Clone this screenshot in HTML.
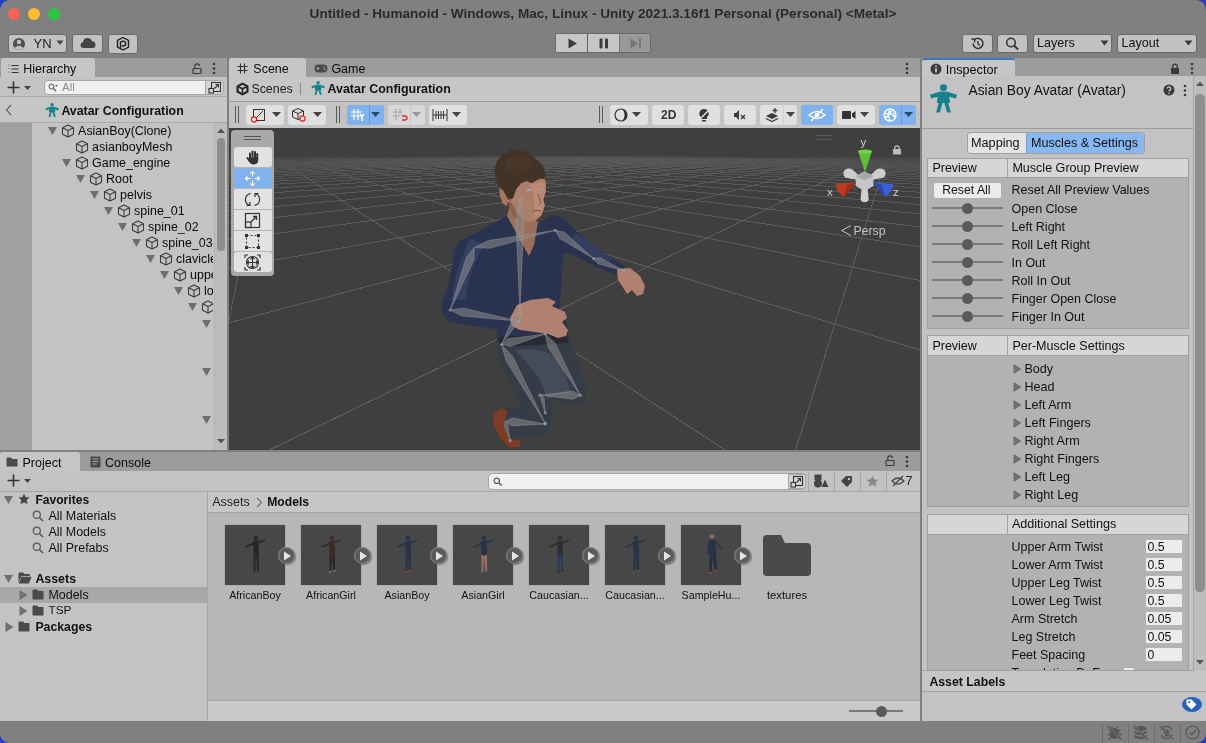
<!DOCTYPE html>
<html><head><meta charset="utf-8">
<style>
*{box-sizing:border-box;margin:0;padding:0}
html,body{width:1206px;height:743px;overflow:hidden;background:#2c3cc0;font-family:"Liberation Sans",sans-serif;font-size:12px;color:#090909}
.a{position:absolute}
#win{position:absolute;left:0;top:0;width:1206px;height:743px;background:#808080;border-radius:10px;overflow:hidden;will-change:transform}
.t{position:absolute;white-space:nowrap;line-height:1}
</style></head><body>
<div id="win">
<div class="a" style="left:8px;top:8px;width:12px;height:12px;border-radius:50%;background:#fe5f57;"></div>
<div class="a" style="left:28px;top:8px;width:12px;height:12px;border-radius:50%;background:#febc2e;"></div>
<div class="a" style="left:48px;top:8px;width:12px;height:12px;border-radius:50%;background:#28c840;"></div>
<div class="t" style="left:0;width:1206px;text-align:center;top:7px;font-size:13.6px;font-weight:bold;color:#2a2a2a">Untitled - Humanoid - Windows, Mac, Linux - Unity 2021.3.16f1 Personal (Personal) &lt;Metal&gt;</div>
<div class="a" style="left:8px;top:34px;width:59px;height:19px;background:#c2c2c2;border:1px solid #6a6a6a;border-radius:3px"></div>
<svg class="a" style="left:12px;top:36px;" width="16" height="16" viewBox="0 0 16 16"><circle cx="7" cy="8" r="6" fill="#505050"/><circle cx="7" cy="6" r="2.2" fill="#c2c2c2"/><path d="M3 11.5 Q7 8 11 11.5 L11 12.5 Q7 15 3 12.5Z" fill="#c2c2c2"/></svg>
<div class="t" style="left:33.5px;top:37.0px;font-size:13px;color:#1e1e1e;">YN</div>
<svg class="a" style="left:56px;top:40px;" width="9" height="6" viewBox="0 0 9 6"><path d="M0.5 0.5h7l-3.5 4.5z" fill="#454545"/></svg>
<div class="a" style="left:72px;top:34px;width:31px;height:19px;background:#c2c2c2;border:1px solid #6a6a6a;border-radius:3px"></div>
<svg class="a" style="left:80px;top:37px;" width="16" height="12" viewBox="0 0 16 12"><path d="M3.5 11 Q0.5 11 0.5 8 Q0.5 5.5 3 5.2 Q3.5 1 7.5 1 Q11 1 12 4.2 Q15.5 4.5 15.5 7.8 Q15.5 11 12.5 11Z" fill="#444"/></svg>
<div class="a" style="left:108px;top:34px;width:30px;height:20px;background:#c2c2c2;border:1px solid #6a6a6a;border-radius:3px"></div>
<svg class="a" style="left:115px;top:36px;" width="16" height="16" viewBox="0 0 16 16"><path d="M8 1.5 L13.5 4.5 V11 L8 14 L2.5 11 V4.5Z" fill="none" stroke="#222" stroke-width="1.4"/><path d="M5.5 13 V6.2 L8 5 L10.5 6.2 V9 L8 10.2 L6.8 9.6" fill="none" stroke="#222" stroke-width="1.4"/></svg>
<div class="a" style="left:555px;top:33px;width:96px;height:20px;border:1px solid #6a6a6a;border-radius:2px;overflow:hidden;background:#999"><div class="a" style="left:0;top:0;width:31px;height:18px;background:#c6c6c6"></div><div class="a" style="left:31px;top:0;width:1px;height:18px;background:#5e5e5e"></div><div class="a" style="left:32px;top:0;width:31px;height:18px;background:#c6c6c6"></div><div class="a" style="left:63px;top:0;width:1px;height:18px;background:#777"></div></div>
<svg class="a" style="left:568px;top:38px;" width="10" height="11" viewBox="0 0 10 11"><path d="M0.5 0.5 L9 5.5 L0.5 10.5Z" fill="#3c3c3c"/></svg>
<svg class="a" style="left:599px;top:38px;" width="10" height="11" viewBox="0 0 10 11"><rect x="0.5" y="0.5" width="3" height="10" rx="1" fill="#3c3c3c"/><rect x="6" y="0.5" width="3" height="10" rx="1" fill="#3c3c3c"/></svg>
<svg class="a" style="left:630px;top:38px;" width="14" height="11" viewBox="0 0 14 11"><path d="M0.5 0.5 L8 5.5 L0.5 10.5Z" fill="#777"/><rect x="9" y="0.5" width="2" height="10" fill="#777"/></svg>
<div class="a" style="left:962px;top:34px;width:31px;height:19px;background:#c2c2c2;border:1px solid #6a6a6a;border-radius:3px"></div>
<div class="a" style="left:997px;top:34px;width:31px;height:19px;background:#c2c2c2;border:1px solid #6a6a6a;border-radius:3px"></div>
<div class="a" style="left:1033px;top:34px;width:79px;height:19px;background:#c2c2c2;border:1px solid #6a6a6a;border-radius:3px"></div>
<div class="a" style="left:1117px;top:34px;width:80px;height:19px;background:#c2c2c2;border:1px solid #6a6a6a;border-radius:3px"></div>
<svg class="a" style="left:969px;top:36px;" width="17" height="15" viewBox="0 0 17 15"><path d="M4 7.5 A5 5 0 1 0 5.5 3.8" fill="none" stroke="#333" stroke-width="1.5"/><path d="M2.5 3 L5.8 3.2 L5.5 6.5" fill="none" stroke="#333" stroke-width="1.4"/><path d="M9 5 V8 L11 9.5" fill="none" stroke="#333" stroke-width="1.4"/></svg>
<svg class="a" style="left:1004px;top:36px;" width="17" height="15" viewBox="0 0 17 15"><circle cx="7" cy="6.5" r="4.3" fill="none" stroke="#333" stroke-width="1.5"/><path d="M10 9.5 L14 13.5" stroke="#333" stroke-width="2"/></svg>
<div class="t" style="left:1037.0px;top:37.2px;font-size:12.6px;color:#111;">Layers</div>
<svg class="a" style="left:1100px;top:40px;" width="10" height="7" viewBox="0 0 10 7"><path d="M0.5 0.5h8l-4 5z" fill="#3a3a3a"/></svg>
<div class="t" style="left:1121.5px;top:37.2px;font-size:12.6px;color:#111;">Layout</div>
<svg class="a" style="left:1184px;top:40px;" width="10" height="7" viewBox="0 0 10 7"><path d="M0.5 0.5h8l-4 5z" fill="#3a3a3a"/></svg>
<div class="a" style="left:0px;top:58px;width:227px;height:19px;background:#9c9c9c;"></div>
<div class="a" style="left:1px;top:58px;width:94px;height:19px;background:#c6c6c6;border-radius:3px 3px 0 0"></div>
<div class="a" style="left:0px;top:77px;width:227px;height:373px;background:#c3c3c3;"></div>
<div class="a" style="left:229px;top:58px;width:691px;height:19px;background:#9c9c9c;"></div>
<div class="a" style="left:229px;top:58px;width:77px;height:19px;background:#c6c6c6;border-radius:3px 3px 0 0"></div>
<div class="a" style="left:229px;top:77px;width:691px;height:24px;background:#c6c6c6;"></div>
<div class="a" style="left:229px;top:101px;width:691px;height:27px;background:#c3c3c3;"></div>
<div class="a" style="left:922px;top:58px;width:284px;height:18px;background:#9c9c9c;"></div>
<div class="a" style="left:922px;top:58px;width:93px;height:18px;background:#c6c6c6;border-radius:3px 3px 0 0;border-top:2px solid #3a79bb"></div>
<div class="a" style="left:922px;top:76px;width:284px;height:644px;background:#c3c3c3;"></div>
<div class="a" style="left:0px;top:452px;width:920px;height:19px;background:#9c9c9c;"></div>
<div class="a" style="left:0px;top:452px;width:80px;height:19px;background:#c6c6c6;border-radius:3px 3px 0 0"></div>
<div class="a" style="left:0px;top:471px;width:920px;height:250px;background:#c3c3c3;"></div>
<svg class="a" style="left:8px;top:64px;" width="11" height="11" viewBox="0 0 11 11"><path d="M3.5 1.5H10.5M3.5 5H10.5M3.5 8.5H10.5" stroke="#333" stroke-width="1"/><path d="M1 0.5V9.5" stroke="#333" stroke-width="0.7" stroke-dasharray="1 2.5"/></svg>
<div class="t" style="left:23.3px;top:62.8px;font-size:12.4px;color:#0a0a0a;">Hierarchy</div>
<svg class="a" style="left:192px;top:63px;" width="10" height="11" viewBox="0 0 10 11"><rect x="1" y="5.5" width="8" height="5" rx="0.8" fill="none" stroke="#3a3a3a" stroke-width="1.2"/><path d="M2.8 5.5 V3.2 A2.3 2.3 0 0 1 7.4 3" fill="none" stroke="#3a3a3a" stroke-width="1.2"/></svg>
<svg class="a" style="left:212px;top:62px;" width="4" height="13" viewBox="0 0 4 13"><circle cx="2" cy="2" r="1.3" fill="#3a3a3a"/><circle cx="2" cy="6.5" r="1.3" fill="#3a3a3a"/><circle cx="2" cy="11" r="1.3" fill="#3a3a3a"/></svg>
<div class="a" style="left:0px;top:96px;width:227px;height:1px;background:#a9a9a9;"></div>
<svg class="a" style="left:7px;top:81px;" width="13" height="13" viewBox="0 0 13 13"><path d="M6.5 0.5V12.5M0.5 6.5H12.5" stroke="#333" stroke-width="1.6"/></svg>
<svg class="a" style="left:24px;top:86px;" width="7" height="4" viewBox="0 0 7 4"><path d="M0 0 H7 L3.5 4Z" fill="#444"/></svg>
<div class="a" style="left:44px;top:80px;width:180px;height:15px;background:#f0f0f0;border:1px solid #a6a6a6;border-radius:4px"></div>
<div class="a" style="left:205px;top:80px;width:19px;height:15px;background:#d6d6d6;border:1px solid #a6a6a6;border-radius:0 4px 4px 0"></div>
<svg class="a" style="left:208px;top:81px;" width="14" height="13" viewBox="0 0 14 13"><rect x="3.5" y="1.5" width="9" height="9" fill="none" stroke="#333" stroke-width="1.1"/><rect x="1" y="7.5" width="4.5" height="4.5" fill="#d6d6d6" stroke="#333" stroke-width="1.1"/><path d="M6.5 7.5L10.5 3.5M7.5 3.5H10.5V6.5" fill="none" stroke="#333" stroke-width="1.1"/></svg>
<svg class="a" style="left:48px;top:83px;" width="10" height="9" viewBox="0 0 10 9"><circle cx="3.5" cy="3.5" r="2.5" fill="none" stroke="#555" stroke-width="1"/><path d="M5.5 5.5L8 8" stroke="#555" stroke-width="1.3"/><path d="M7 2h3l-1.5 1.7z" fill="#555"/></svg>
<div class="t" style="left:62.0px;top:81.8px;font-size:11.5px;color:#8c8c8c;">All</div>
<div class="a" style="left:0px;top:97px;width:227px;height:25px;background:#c6c6c6;"></div>
<div class="a" style="left:0px;top:122px;width:227px;height:1px;background:#a9a9a9;"></div>
<svg class="a" style="left:5px;top:104px;" width="8" height="12" viewBox="0 0 8 12"><path d="M6 1 L1.5 6 L6 11" fill="none" stroke="#6a6a6a" stroke-width="1.3"/></svg>
<svg class="a" style="left:45px;top:103px;" width="15" height="15" viewBox="0 0 15 15"><g transform="scale(0.95)"><circle cx="7.5" cy="1.9" r="1.8" fill="#16808c"/><path d="M4.8 4 H10.2 L10.9 9.8 H4.1Z" fill="#16808c"/><path d="M5 4.1 L0.5 5.6 L1 7.5 L5 6.5Z M10 4.1 L14.5 5.6 L14 7.5 L10 6.5Z" fill="#16808c"/><path d="M5.1 9.4 L3.7 14.8 H5.6 L7.1 9.6Z M9.9 9.4 L11.3 14.8 H9.4 L7.9 9.6Z" fill="#16808c"/></g></svg>
<div class="t" style="left:61.4px;top:104.8px;font-size:12.35px;font-weight:bold;color:#111;">Avatar Configuration</div>
<div class="a" style="left:0px;top:123px;width:32px;height:327px;background:#a1a1a1;"></div>
<div class="a" style="left:0;top:0;width:213px;height:450px;overflow:hidden">
<svg class="a" style="left:48px;top:127px;" width="9" height="8" viewBox="0 0 9 8"><path d="M0 0 H9 L4.5 8Z" fill="#6f6f6f"/></svg>
<svg class="a" style="left:61px;top:124px;" width="14" height="14" viewBox="0 0 14 14"><path d="M7 1 L12.5 3.8 V10.2 L7 13 L1.5 10.2 V3.8Z M1.5 3.8 L7 6.6 L12.5 3.8 M7 6.6 V13" fill="none" stroke="#3c3c3c" stroke-width="1.1" stroke-linejoin="round"/></svg>
<div class="t" style="left:78.1px;top:124.8px;font-size:12.45px;color:#0a0a0a;">AsianBoy(Clone)</div>
<svg class="a" style="left:75px;top:140px;" width="14" height="14" viewBox="0 0 14 14"><path d="M7 1 L12.5 3.8 V10.2 L7 13 L1.5 10.2 V3.8Z M1.5 3.8 L7 6.6 L12.5 3.8 M7 6.6 V13" fill="none" stroke="#3c3c3c" stroke-width="1.1" stroke-linejoin="round"/></svg>
<div class="t" style="left:92.1px;top:140.8px;font-size:12.45px;color:#0a0a0a;">asianboyMesh</div>
<svg class="a" style="left:62px;top:159px;" width="9" height="8" viewBox="0 0 9 8"><path d="M0 0 H9 L4.5 8Z" fill="#6f6f6f"/></svg>
<svg class="a" style="left:75px;top:156px;" width="14" height="14" viewBox="0 0 14 14"><path d="M7 1 L12.5 3.8 V10.2 L7 13 L1.5 10.2 V3.8Z M1.5 3.8 L7 6.6 L12.5 3.8 M7 6.6 V13" fill="none" stroke="#3c3c3c" stroke-width="1.1" stroke-linejoin="round"/></svg>
<div class="t" style="left:92.1px;top:156.8px;font-size:12.45px;color:#0a0a0a;">Game_engine</div>
<svg class="a" style="left:76px;top:175px;" width="9" height="8" viewBox="0 0 9 8"><path d="M0 0 H9 L4.5 8Z" fill="#6f6f6f"/></svg>
<svg class="a" style="left:89px;top:172px;" width="14" height="14" viewBox="0 0 14 14"><path d="M7 1 L12.5 3.8 V10.2 L7 13 L1.5 10.2 V3.8Z M1.5 3.8 L7 6.6 L12.5 3.8 M7 6.6 V13" fill="none" stroke="#3c3c3c" stroke-width="1.1" stroke-linejoin="round"/></svg>
<div class="t" style="left:106.1px;top:172.8px;font-size:12.45px;color:#0a0a0a;">Root</div>
<svg class="a" style="left:90px;top:191px;" width="9" height="8" viewBox="0 0 9 8"><path d="M0 0 H9 L4.5 8Z" fill="#6f6f6f"/></svg>
<svg class="a" style="left:103px;top:188px;" width="14" height="14" viewBox="0 0 14 14"><path d="M7 1 L12.5 3.8 V10.2 L7 13 L1.5 10.2 V3.8Z M1.5 3.8 L7 6.6 L12.5 3.8 M7 6.6 V13" fill="none" stroke="#3c3c3c" stroke-width="1.1" stroke-linejoin="round"/></svg>
<div class="t" style="left:120.1px;top:188.8px;font-size:12.45px;color:#0a0a0a;">pelvis</div>
<svg class="a" style="left:104px;top:207px;" width="9" height="8" viewBox="0 0 9 8"><path d="M0 0 H9 L4.5 8Z" fill="#6f6f6f"/></svg>
<svg class="a" style="left:117px;top:204px;" width="14" height="14" viewBox="0 0 14 14"><path d="M7 1 L12.5 3.8 V10.2 L7 13 L1.5 10.2 V3.8Z M1.5 3.8 L7 6.6 L12.5 3.8 M7 6.6 V13" fill="none" stroke="#3c3c3c" stroke-width="1.1" stroke-linejoin="round"/></svg>
<div class="t" style="left:134.1px;top:204.8px;font-size:12.45px;color:#0a0a0a;">spine_01</div>
<svg class="a" style="left:118px;top:223px;" width="9" height="8" viewBox="0 0 9 8"><path d="M0 0 H9 L4.5 8Z" fill="#6f6f6f"/></svg>
<svg class="a" style="left:131px;top:220px;" width="14" height="14" viewBox="0 0 14 14"><path d="M7 1 L12.5 3.8 V10.2 L7 13 L1.5 10.2 V3.8Z M1.5 3.8 L7 6.6 L12.5 3.8 M7 6.6 V13" fill="none" stroke="#3c3c3c" stroke-width="1.1" stroke-linejoin="round"/></svg>
<div class="t" style="left:148.1px;top:220.8px;font-size:12.45px;color:#0a0a0a;">spine_02</div>
<svg class="a" style="left:132px;top:239px;" width="9" height="8" viewBox="0 0 9 8"><path d="M0 0 H9 L4.5 8Z" fill="#6f6f6f"/></svg>
<svg class="a" style="left:145px;top:236px;" width="14" height="14" viewBox="0 0 14 14"><path d="M7 1 L12.5 3.8 V10.2 L7 13 L1.5 10.2 V3.8Z M1.5 3.8 L7 6.6 L12.5 3.8 M7 6.6 V13" fill="none" stroke="#3c3c3c" stroke-width="1.1" stroke-linejoin="round"/></svg>
<div class="t" style="left:162.1px;top:236.8px;font-size:12.45px;color:#0a0a0a;">spine_03</div>
<svg class="a" style="left:146px;top:255px;" width="9" height="8" viewBox="0 0 9 8"><path d="M0 0 H9 L4.5 8Z" fill="#6f6f6f"/></svg>
<svg class="a" style="left:159px;top:252px;" width="14" height="14" viewBox="0 0 14 14"><path d="M7 1 L12.5 3.8 V10.2 L7 13 L1.5 10.2 V3.8Z M1.5 3.8 L7 6.6 L12.5 3.8 M7 6.6 V13" fill="none" stroke="#3c3c3c" stroke-width="1.1" stroke-linejoin="round"/></svg>
<div class="t" style="left:176.1px;top:252.8px;font-size:12.45px;color:#0a0a0a;">clavicle_l</div>
<svg class="a" style="left:160px;top:271px;" width="9" height="8" viewBox="0 0 9 8"><path d="M0 0 H9 L4.5 8Z" fill="#6f6f6f"/></svg>
<svg class="a" style="left:173px;top:268px;" width="14" height="14" viewBox="0 0 14 14"><path d="M7 1 L12.5 3.8 V10.2 L7 13 L1.5 10.2 V3.8Z M1.5 3.8 L7 6.6 L12.5 3.8 M7 6.6 V13" fill="none" stroke="#3c3c3c" stroke-width="1.1" stroke-linejoin="round"/></svg>
<div class="t" style="left:190.1px;top:268.8px;font-size:12.45px;color:#0a0a0a;">upperarm_l</div>
<svg class="a" style="left:174px;top:287px;" width="9" height="8" viewBox="0 0 9 8"><path d="M0 0 H9 L4.5 8Z" fill="#6f6f6f"/></svg>
<svg class="a" style="left:187px;top:284px;" width="14" height="14" viewBox="0 0 14 14"><path d="M7 1 L12.5 3.8 V10.2 L7 13 L1.5 10.2 V3.8Z M1.5 3.8 L7 6.6 L12.5 3.8 M7 6.6 V13" fill="none" stroke="#3c3c3c" stroke-width="1.1" stroke-linejoin="round"/></svg>
<div class="t" style="left:204.1px;top:284.8px;font-size:12.45px;color:#0a0a0a;">lowerarm_l</div>
<svg class="a" style="left:188px;top:303px;" width="9" height="8" viewBox="0 0 9 8"><path d="M0 0 H9 L4.5 8Z" fill="#6f6f6f"/></svg>
<svg class="a" style="left:201px;top:300px;" width="14" height="14" viewBox="0 0 14 14"><path d="M7 1 L12.5 3.8 V10.2 L7 13 L1.5 10.2 V3.8Z M1.5 3.8 L7 6.6 L12.5 3.8 M7 6.6 V13" fill="none" stroke="#3c3c3c" stroke-width="1.1" stroke-linejoin="round"/></svg>
<svg class="a" style="left:202px;top:320px;" width="9" height="8" viewBox="0 0 9 8"><path d="M0 0 H9 L4.5 8Z" fill="#6f6f6f"/></svg>
<svg class="a" style="left:202px;top:368px;" width="9" height="8" viewBox="0 0 9 8"><path d="M0 0 H9 L4.5 8Z" fill="#6f6f6f"/></svg>
<svg class="a" style="left:202px;top:416px;" width="9" height="8" viewBox="0 0 9 8"><path d="M0 0 H9 L4.5 8Z" fill="#6f6f6f"/></svg>
</div>
<div class="a" style="left:214px;top:123px;width:13px;height:327px;background:#bdbdbd;"></div>
<div class="a" style="left:214px;top:123px;width:1px;height:327px;background:#b0b0b0;"></div>
<svg class="a" style="left:216px;top:127px;" width="10" height="7" viewBox="0 0 10 7"><path d="M1 6H9L5 1.5Z" fill="#555"/></svg>
<div class="a" style="left:216.5px;top:138px;width:8.5px;height:113px;border-radius:4.5px;background:#8e8e8e"></div>
<svg class="a" style="left:216px;top:438px;" width="10" height="7" viewBox="0 0 10 7"><path d="M1 1H9L5 5.5Z" fill="#555"/></svg>
<svg class="a" style="left:237px;top:63px;" width="11" height="11" viewBox="0 0 11 11"><path d="M3.5 0.5V10.5M7.5 0.5V10.5M0.5 3.5H10.5M0.5 7.5H10.5" stroke="#333" stroke-width="1.1"/></svg>
<div class="t" style="left:253.3px;top:63.2px;font-size:12.5px;color:#0a0a0a;">Scene</div>
<svg class="a" style="left:314px;top:64px;" width="14" height="9" viewBox="0 0 14 9"><rect x="0.5" y="0.5" width="13" height="8" rx="4" fill="#4a4a4a"/><path d="M2.5 4.5H5.5M4 3V6" stroke="#a5a5a5" stroke-width="1"/><circle cx="10" cy="3.5" r="0.8" fill="#a5a5a5"/><circle cx="11" cy="5.5" r="0.8" fill="#a5a5a5"/></svg>
<div class="t" style="left:331.4px;top:63.2px;font-size:12.5px;color:#0a0a0a;">Game</div>
<svg class="a" style="left:905px;top:62px;" width="4" height="13" viewBox="0 0 4 13"><circle cx="2" cy="2" r="1.3" fill="#3a3a3a"/><circle cx="2" cy="6.5" r="1.3" fill="#3a3a3a"/><circle cx="2" cy="11" r="1.3" fill="#3a3a3a"/></svg>
<div class="a" style="left:229px;top:101px;width:691px;height:1px;background:#9a9a9a;"></div>
<svg class="a" style="left:236px;top:82px;" width="13" height="14" viewBox="0 0 13 14"><path d="M6.5 0.5 L12.5 3.8 V10.2 L6.5 13.5 L0.5 10.2 V3.8Z" fill="#222"/><path d="M6.5 2.8 L10.4 5 V9 L6.5 11.2 L2.6 9 V5Z" fill="#cbcbcb"/><path d="M6.5 6.8 L10.4 5 M6.5 6.8 L2.6 5 M6.5 6.8 V11.2" stroke="#222" stroke-width="1.6"/></svg>
<div class="t" style="left:251.4px;top:82.8px;font-size:12.4px;color:#222;">Scenes</div>
<div class="a" style="left:300px;top:83px;width:1px;height:12px;background:#8c8c8c;"></div>
<svg class="a" style="left:311px;top:81px;" width="15" height="15" viewBox="0 0 15 15"><g transform="scale(0.95)"><circle cx="7.5" cy="1.9" r="1.8" fill="#16808c"/><path d="M4.8 4 H10.2 L10.9 9.8 H4.1Z" fill="#16808c"/><path d="M5 4.1 L0.5 5.6 L1 7.5 L5 6.5Z M10 4.1 L14.5 5.6 L14 7.5 L10 6.5Z" fill="#16808c"/><path d="M5.1 9.4 L3.7 14.8 H5.6 L7.1 9.6Z M9.9 9.4 L11.3 14.8 H9.4 L7.9 9.6Z" fill="#16808c"/></g></svg>
<div class="t" style="left:327.5px;top:82.8px;font-size:12.45px;font-weight:bold;color:#111;">Avatar Configuration</div>
<div class="a" style="left:235px;top:106px;width:1px;height:17px;background:#5a5a5a;"></div>
<div class="a" style="left:238px;top:106px;width:1px;height:17px;background:#5a5a5a;"></div>
<div class="a" style="left:246px;top:105px;width:38px;height:20px;background:#e0e0e0;border-radius:3px"></div>
<div class="a" style="left:288px;top:105px;width:38px;height:20px;background:#e0e0e0;border-radius:3px"></div>
<svg class="a" style="left:250px;top:107px;" width="16" height="16" viewBox="0 0 16 16"><rect x="3.5" y="2.5" width="11" height="11" fill="none" stroke="#333" stroke-width="1"/><path d="M5 12L13 4" stroke="#333" stroke-width="1"/><circle cx="4" cy="12.5" r="2.6" fill="#e4e4e4" stroke="#d22" stroke-width="1.2"/></svg>
<svg class="a" style="left:272px;top:112px;" width="9" height="5" viewBox="0 0 9 5"><path d="M0 0 H9 L4.5 5Z" fill="#444"/></svg>
<svg class="a" style="left:291px;top:107px;" width="16" height="16" viewBox="0 0 16 16"><path d="M7 1.5 L12.5 4 V10 L7 12.5 L1.5 10 V4Z M1.5 4 L7 6.5 L12.5 4 M7 6.5V12.5" fill="none" stroke="#333" stroke-width="1"/><circle cx="11.5" cy="11.5" r="2.6" fill="#e4e4e4" stroke="#d22" stroke-width="1.2"/></svg>
<svg class="a" style="left:313px;top:112px;" width="9" height="5" viewBox="0 0 9 5"><path d="M0 0 H9 L4.5 5Z" fill="#444"/></svg>
<div class="a" style="left:336px;top:106px;width:1px;height:17px;background:#5a5a5a;"></div>
<div class="a" style="left:339px;top:106px;width:1px;height:17px;background:#5a5a5a;"></div>
<div class="a" style="left:347px;top:105px;width:37px;height:20px;background:#80b2ee;border-radius:3px"></div>
<div class="a" style="left:369px;top:105px;width:1px;height:20px;background:#6a9ad4;"></div>
<svg class="a" style="left:350px;top:107px;" width="16" height="16" viewBox="0 0 16 16"><path d="M4 2V13M8 2V13M1 5H12M1 9H12" stroke="#fff" stroke-width="1.1"/><path d="M10 7L12 10L14 7M12 10V14" fill="none" stroke="#fff" stroke-width="1.5"/></svg>
<svg class="a" style="left:371px;top:112px;" width="9" height="5" viewBox="0 0 9 5"><path d="M0 0 H9 L4.5 5Z" fill="#2a4a70"/></svg>
<div class="a" style="left:388px;top:105px;width:37px;height:20px;background:#d8d8d8;border-radius:3px"></div>
<div class="a" style="left:410px;top:105px;width:1px;height:20px;background:#c8c8c8;"></div>
<svg class="a" style="left:392px;top:107px;" width="16" height="16" viewBox="0 0 16 16"><path d="M4 2V13M8 2V10M1 5H11M1 9H7" stroke="#888" stroke-width="1" stroke-dasharray="1.5 1"/><path d="M10 9H13A2 2 0 0 1 13 13H10" fill="none" stroke="#c33" stroke-width="1.3"/></svg>
<svg class="a" style="left:412px;top:112px;" width="9" height="5" viewBox="0 0 9 5"><path d="M0 0 H9 L4.5 5Z" fill="#999"/></svg>
<div class="a" style="left:429px;top:105px;width:38px;height:20px;background:#e0e0e0;border-radius:3px"></div>
<svg class="a" style="left:432px;top:108px;" width="16" height="14" viewBox="0 0 16 14"><path d="M1 1V13M15 1V13M1 7H15M4 3V11M6.5 3V11M9 3V11M11.5 3V11" stroke="#333" stroke-width="1"/></svg>
<svg class="a" style="left:452px;top:112px;" width="9" height="5" viewBox="0 0 9 5"><path d="M0 0 H9 L4.5 5Z" fill="#444"/></svg>
<div class="a" style="left:599px;top:106px;width:1px;height:17px;background:#5a5a5a;"></div>
<div class="a" style="left:602px;top:106px;width:1px;height:17px;background:#5a5a5a;"></div>
<div class="a" style="left:610px;top:105px;width:38px;height:20px;background:#e0e0e0;border-radius:3px"></div>
<svg class="a" style="left:613px;top:107px;" width="16" height="16" viewBox="0 0 16 16"><circle cx="8" cy="8" r="6" fill="none" stroke="#333" stroke-width="1.2"/><path d="M8 2A6 6 0 0 1 8 14A3.5 6 0 0 0 8 2Z" fill="#333"/></svg>
<svg class="a" style="left:632px;top:112px;" width="9" height="5" viewBox="0 0 9 5"><path d="M0 0 H9 L4.5 5Z" fill="#444"/></svg>
<div class="a" style="left:652px;top:105px;width:32px;height:20px;background:#e0e0e0;border-radius:3px"></div>
<div class="t" style="left:661.0px;top:109.0px;font-size:12px;font-weight:bold;color:#333;">2D</div>
<div class="a" style="left:688px;top:105px;width:32px;height:20px;background:#e0e0e0;border-radius:3px"></div>
<svg class="a" style="left:697px;top:108px;" width="14" height="14" viewBox="0 0 14 14"><path d="M7 1A4.5 4.5 0 0 1 10 9V11H4V9A4.5 4.5 0 0 1 7 1Z" fill="#3a3a3a"/><rect x="5" y="12" width="4" height="1.5" fill="#3a3a3a"/><path d="M2 12L12 2" stroke="#e4e4e4" stroke-width="1.4"/></svg>
<div class="a" style="left:724px;top:105px;width:32px;height:20px;background:#e0e0e0;border-radius:3px"></div>
<svg class="a" style="left:733px;top:108px;" width="14" height="14" viewBox="0 0 14 14"><path d="M1 5H3L6 2V12L3 9H1Z" fill="#3a3a3a"/><path d="M8 7L12 11M12 7L8 11" stroke="#3a3a3a" stroke-width="1.3"/></svg>
<div class="a" style="left:760px;top:105px;width:37px;height:20px;background:#e0e0e0;border-radius:3px"></div>
<div class="a" style="left:783px;top:105px;width:1px;height:20px;background:#cfcfcf;"></div>
<svg class="a" style="left:764px;top:107px;" width="16" height="16" viewBox="0 0 16 16"><path d="M2 9L8 6L14 9L8 12Z" fill="#3a3a3a"/><path d="M2 11.5L8 14.5L14 11.5" fill="none" stroke="#3a3a3a" stroke-width="1.2"/><path d="M11 1V6M8.5 3.5H13.5" stroke="#3a3a3a" stroke-width="1.3"/></svg>
<svg class="a" style="left:786px;top:112px;" width="9" height="5" viewBox="0 0 9 5"><path d="M0 0 H9 L4.5 5Z" fill="#444"/></svg>
<div class="a" style="left:801px;top:105px;width:32px;height:20px;background:#80b2ee;border-radius:3px"></div>
<svg class="a" style="left:808px;top:108px;" width="18" height="14" viewBox="0 0 18 14"><path d="M1 7Q9 0 17 7Q9 14 1 7Z" fill="none" stroke="#fff" stroke-width="1.4"/><circle cx="9" cy="7" r="2.3" fill="#fff"/><path d="M3 13L15 1" stroke="#fff" stroke-width="1.4"/></svg>
<div class="a" style="left:837px;top:105px;width:38px;height:20px;background:#e0e0e0;border-radius:3px"></div>
<svg class="a" style="left:841px;top:108px;" width="16" height="14" viewBox="0 0 16 14"><rect x="1" y="3" width="9" height="8" rx="1" fill="#333"/><path d="M11 5.5L14.5 3V11L11 8.5Z" fill="#333"/></svg>
<svg class="a" style="left:860px;top:112px;" width="9" height="5" viewBox="0 0 9 5"><path d="M0 0 H9 L4.5 5Z" fill="#444"/></svg>
<div class="a" style="left:879px;top:105px;width:37px;height:20px;background:#80b2ee;border-radius:3px"></div>
<div class="a" style="left:901px;top:105px;width:1px;height:20px;background:#6a9ad4;"></div>
<svg class="a" style="left:882px;top:107px;" width="16" height="16" viewBox="0 0 16 16"><circle cx="8" cy="8" r="6" fill="none" stroke="#fff" stroke-width="1.3"/><path d="M3 6Q8 9 13 6M8 2Q5 8 8 14M4 11L11 3" fill="none" stroke="#fff" stroke-width="1.1"/><circle cx="8" cy="5" r="1.3" fill="#fff"/><circle cx="4" cy="10" r="1.3" fill="#fff"/><circle cx="12" cy="9" r="1.3" fill="#fff"/></svg>
<svg class="a" style="left:904px;top:112px;" width="9" height="5" viewBox="0 0 9 5"><path d="M0 0 H9 L4.5 5Z" fill="#2a4a70"/></svg>
<div class="a" style="left:229px;top:128px;width:691px;height:322px;background:#3f3f3f;"></div>
<svg class="a" style="left:229px;top:128px" width="691" height="322" viewBox="0 0 691 322"><defs><linearGradient id="hz" x1="0" y1="0" x2="0" y2="1"><stop offset="0" stop-color="#4a4a4a"/><stop offset="1" stop-color="#3f3f3f" stop-opacity="0"/></linearGradient></defs><rect x="0" y="29.5" width="691" height="14" fill="url(#hz)"/><g stroke="#606060" stroke-width="1" fill="none" shape-rendering="crispEdges"><line x1="-132.2" y1="34.0" x2="73.1" y2="30.8" stroke-opacity="0.04"/><line x1="-110.9" y1="34.0" x2="88.9" y2="30.8" stroke-opacity="0.05"/><line x1="88.9" y1="30.8" x2="236.9" y2="28.5" stroke-opacity="0.03"/><line x1="-89.6" y1="34.0" x2="104.7" y2="30.8" stroke-opacity="0.07"/><line x1="104.7" y1="30.8" x2="248.6" y2="28.5" stroke-opacity="0.04"/><line x1="-68.3" y1="34.0" x2="120.5" y2="30.8" stroke-opacity="0.09"/><line x1="120.5" y1="30.8" x2="260.3" y2="28.5" stroke-opacity="0.05"/><line x1="-294.2" y1="38.2" x2="-46.9" y2="34.0" stroke-opacity="0.10"/><line x1="-46.9" y1="34.0" x2="136.3" y2="30.8" stroke-opacity="0.11"/><line x1="136.3" y1="30.8" x2="272.0" y2="28.5" stroke-opacity="0.06"/><line x1="-265.4" y1="38.2" x2="-25.6" y2="34.0" stroke-opacity="0.12"/><line x1="-25.6" y1="34.0" x2="152.1" y2="30.8" stroke-opacity="0.13"/><line x1="152.1" y1="30.8" x2="283.7" y2="28.5" stroke-opacity="0.07"/><line x1="-236.6" y1="38.2" x2="-4.3" y2="34.0" stroke-opacity="0.15"/><line x1="-4.3" y1="34.0" x2="167.8" y2="30.8" stroke-opacity="0.15"/><line x1="167.8" y1="30.8" x2="295.4" y2="28.5" stroke-opacity="0.08"/><line x1="-207.9" y1="38.2" x2="17.0" y2="34.0" stroke-opacity="0.17"/><line x1="17.0" y1="34.0" x2="183.6" y2="30.8" stroke-opacity="0.17"/><line x1="183.6" y1="30.8" x2="307.1" y2="28.5" stroke-opacity="0.09"/><line x1="-179.1" y1="38.2" x2="38.3" y2="34.0" stroke-opacity="0.20"/><line x1="38.3" y1="34.0" x2="199.4" y2="30.8" stroke-opacity="0.19"/><line x1="199.4" y1="30.8" x2="318.8" y2="28.5" stroke-opacity="0.10"/><line x1="-150.3" y1="38.2" x2="59.6" y2="34.0" stroke-opacity="0.23"/><line x1="59.6" y1="34.0" x2="215.2" y2="30.8" stroke-opacity="0.21"/><line x1="215.2" y1="30.8" x2="330.5" y2="28.5" stroke-opacity="0.10"/><line x1="-121.6" y1="38.2" x2="80.9" y2="34.0" stroke-opacity="0.25"/><line x1="80.9" y1="34.0" x2="231.0" y2="30.8" stroke-opacity="0.23"/><line x1="231.0" y1="30.8" x2="342.2" y2="28.5" stroke-opacity="0.11"/><line x1="-92.8" y1="38.2" x2="102.2" y2="34.0" stroke-opacity="0.28"/><line x1="102.2" y1="34.0" x2="246.8" y2="30.8" stroke-opacity="0.24"/><line x1="246.8" y1="30.8" x2="353.9" y2="28.5" stroke-opacity="0.11"/><line x1="-64.1" y1="38.2" x2="123.5" y2="34.0" stroke-opacity="0.30"/><line x1="123.5" y1="34.0" x2="262.6" y2="30.8" stroke-opacity="0.26"/><line x1="262.6" y1="30.8" x2="365.6" y2="28.5" stroke-opacity="0.12"/><line x1="-278.3" y1="44.0" x2="-35.3" y2="38.2" stroke-opacity="0.31"/><line x1="-35.3" y1="38.2" x2="144.9" y2="34.0" stroke-opacity="0.32"/><line x1="144.9" y1="34.0" x2="278.4" y2="30.8" stroke-opacity="0.27"/><line x1="278.4" y1="30.8" x2="377.3" y2="28.5" stroke-opacity="0.12"/><line x1="-239.5" y1="44.0" x2="-6.5" y2="38.2" stroke-opacity="0.34"/><line x1="-6.5" y1="38.2" x2="166.2" y2="34.0" stroke-opacity="0.35"/><line x1="166.2" y1="34.0" x2="294.2" y2="30.8" stroke-opacity="0.28"/><line x1="294.2" y1="30.8" x2="389.0" y2="28.5" stroke-opacity="0.12"/><line x1="-200.7" y1="44.0" x2="22.2" y2="38.2" stroke-opacity="0.37"/><line x1="22.2" y1="38.2" x2="187.5" y2="34.0" stroke-opacity="0.37"/><line x1="187.5" y1="34.0" x2="310.0" y2="30.8" stroke-opacity="0.29"/><line x1="310.0" y1="30.8" x2="400.7" y2="28.5" stroke-opacity="0.12"/><line x1="-161.9" y1="44.0" x2="51.0" y2="38.2" stroke-opacity="0.40"/><line x1="51.0" y1="38.2" x2="208.8" y2="34.0" stroke-opacity="0.39"/><line x1="208.8" y1="34.0" x2="325.7" y2="30.8" stroke-opacity="0.30"/><line x1="325.7" y1="30.8" x2="412.4" y2="28.5" stroke-opacity="0.12"/><line x1="-123.1" y1="44.0" x2="79.8" y2="38.2" stroke-opacity="0.43"/><line x1="79.8" y1="38.2" x2="230.1" y2="34.0" stroke-opacity="0.41"/><line x1="230.1" y1="34.0" x2="341.5" y2="30.8" stroke-opacity="0.31"/><line x1="341.5" y1="30.8" x2="424.1" y2="28.5" stroke-opacity="0.12"/><line x1="-84.3" y1="44.0" x2="108.5" y2="38.2" stroke-opacity="0.46"/><line x1="108.5" y1="38.2" x2="251.4" y2="34.0" stroke-opacity="0.43"/><line x1="251.4" y1="34.0" x2="357.3" y2="30.8" stroke-opacity="0.32"/><line x1="357.3" y1="30.8" x2="435.8" y2="28.5" stroke-opacity="0.11"/><line x1="-291.9" y1="51.7" x2="-45.5" y2="44.0" stroke-opacity="0.47"/><line x1="-45.5" y1="44.0" x2="137.3" y2="38.2" stroke-opacity="0.48"/><line x1="137.3" y1="38.2" x2="272.7" y2="34.0" stroke-opacity="0.44"/><line x1="272.7" y1="34.0" x2="373.1" y2="30.8" stroke-opacity="0.32"/><line x1="373.1" y1="30.8" x2="447.5" y2="28.5" stroke-opacity="0.11"/><line x1="-239.6" y1="51.7" x2="-6.6" y2="44.0" stroke-opacity="0.50"/><line x1="-6.6" y1="44.0" x2="166.0" y2="38.2" stroke-opacity="0.51"/><line x1="166.0" y1="38.2" x2="294.0" y2="34.0" stroke-opacity="0.46"/><line x1="294.0" y1="34.0" x2="388.9" y2="30.8" stroke-opacity="0.32"/><line x1="388.9" y1="30.8" x2="459.2" y2="28.5" stroke-opacity="0.10"/><line x1="-187.2" y1="51.7" x2="32.2" y2="44.0" stroke-opacity="0.53"/><line x1="32.2" y1="44.0" x2="194.8" y2="38.2" stroke-opacity="0.53"/><line x1="194.8" y1="38.2" x2="315.4" y2="34.0" stroke-opacity="0.47"/><line x1="315.4" y1="34.0" x2="404.7" y2="30.8" stroke-opacity="0.32"/><line x1="404.7" y1="30.8" x2="470.9" y2="28.5" stroke-opacity="0.09"/><line x1="-134.8" y1="51.7" x2="71.0" y2="44.0" stroke-opacity="0.56"/><line x1="71.0" y1="44.0" x2="223.6" y2="38.2" stroke-opacity="0.55"/><line x1="223.6" y1="38.2" x2="336.7" y2="34.0" stroke-opacity="0.48"/><line x1="336.7" y1="34.0" x2="420.5" y2="30.8" stroke-opacity="0.32"/><line x1="420.5" y1="30.8" x2="482.6" y2="28.5" stroke-opacity="0.08"/><line x1="-82.4" y1="51.7" x2="109.8" y2="44.0" stroke-opacity="0.59"/><line x1="109.8" y1="44.0" x2="252.3" y2="38.2" stroke-opacity="0.57"/><line x1="252.3" y1="38.2" x2="358.0" y2="34.0" stroke-opacity="0.48"/><line x1="358.0" y1="34.0" x2="436.3" y2="30.8" stroke-opacity="0.31"/><line x1="436.3" y1="30.8" x2="494.3" y2="28.5" stroke-opacity="0.07"/><line x1="-271.0" y1="62.1" x2="-30.1" y2="51.7" stroke-opacity="0.61"/><line x1="-30.1" y1="51.7" x2="148.6" y2="44.0" stroke-opacity="0.62"/><line x1="148.6" y1="44.0" x2="281.1" y2="38.2" stroke-opacity="0.59"/><line x1="281.1" y1="38.2" x2="379.3" y2="34.0" stroke-opacity="0.49"/><line x1="379.3" y1="34.0" x2="452.1" y2="30.8" stroke-opacity="0.31"/><line x1="452.1" y1="30.8" x2="506.0" y2="28.5" stroke-opacity="0.06"/><line x1="-200.3" y1="62.1" x2="22.3" y2="51.7" stroke-opacity="0.65"/><line x1="22.3" y1="51.7" x2="187.4" y2="44.0" stroke-opacity="0.64"/><line x1="187.4" y1="44.0" x2="309.9" y2="38.2" stroke-opacity="0.60"/><line x1="309.9" y1="38.2" x2="400.6" y2="34.0" stroke-opacity="0.49"/><line x1="400.6" y1="34.0" x2="467.8" y2="30.8" stroke-opacity="0.30"/><line x1="467.8" y1="30.8" x2="517.7" y2="28.5" stroke-opacity="0.05"/><line x1="-129.7" y1="62.1" x2="74.7" y2="51.7" stroke-opacity="0.68"/><line x1="74.7" y1="51.7" x2="226.3" y2="44.0" stroke-opacity="0.67"/><line x1="226.3" y1="44.0" x2="338.6" y2="38.2" stroke-opacity="0.61"/><line x1="338.6" y1="38.2" x2="421.9" y2="34.0" stroke-opacity="0.48"/><line x1="421.9" y1="34.0" x2="483.6" y2="30.8" stroke-opacity="0.29"/><line x1="483.6" y1="30.8" x2="529.4" y2="28.5" stroke-opacity="0.04"/><line x1="-59.0" y1="62.1" x2="127.1" y2="51.7" stroke-opacity="0.71"/><line x1="127.1" y1="51.7" x2="265.1" y2="44.0" stroke-opacity="0.69"/><line x1="265.1" y1="44.0" x2="367.4" y2="38.2" stroke-opacity="0.62"/><line x1="367.4" y1="38.2" x2="443.2" y2="34.0" stroke-opacity="0.48"/><line x1="443.2" y1="34.0" x2="499.4" y2="30.8" stroke-opacity="0.28"/><line x1="499.4" y1="30.8" x2="541.1" y2="28.5" stroke-opacity="0.03"/><line x1="-214.5" y1="76.2" x2="11.6" y2="62.1" stroke-opacity="0.73"/><line x1="11.6" y1="62.1" x2="179.4" y2="51.7" stroke-opacity="0.73"/><line x1="179.4" y1="51.7" x2="303.9" y2="44.0" stroke-opacity="0.70"/><line x1="303.9" y1="44.0" x2="396.2" y2="38.2" stroke-opacity="0.62"/><line x1="396.2" y1="38.2" x2="464.5" y2="34.0" stroke-opacity="0.47"/><line x1="464.5" y1="34.0" x2="515.2" y2="30.8" stroke-opacity="0.26"/><line x1="-119.2" y1="76.2" x2="82.3" y2="62.1" stroke-opacity="0.76"/><line x1="82.3" y1="62.1" x2="231.8" y2="51.7" stroke-opacity="0.76"/><line x1="231.8" y1="51.7" x2="342.7" y2="44.0" stroke-opacity="0.71"/><line x1="342.7" y1="44.0" x2="424.9" y2="38.2" stroke-opacity="0.61"/><line x1="424.9" y1="38.2" x2="485.8" y2="34.0" stroke-opacity="0.46"/><line x1="485.8" y1="34.0" x2="531.0" y2="30.8" stroke-opacity="0.25"/><line x1="-262.2" y1="95.1" x2="-23.9" y2="76.2" stroke-opacity="0.79"/><line x1="-23.9" y1="76.2" x2="153.0" y2="62.1" stroke-opacity="0.79"/><line x1="153.0" y1="62.1" x2="284.2" y2="51.7" stroke-opacity="0.77"/><line x1="284.2" y1="51.7" x2="381.5" y2="44.0" stroke-opacity="0.72"/><line x1="381.5" y1="44.0" x2="453.7" y2="38.2" stroke-opacity="0.61"/><line x1="453.7" y1="38.2" x2="507.2" y2="34.0" stroke-opacity="0.45"/><line x1="507.2" y1="34.0" x2="546.8" y2="30.8" stroke-opacity="0.23"/><line x1="-133.7" y1="95.1" x2="71.4" y2="76.2" stroke-opacity="0.82"/><line x1="71.4" y1="76.2" x2="223.6" y2="62.1" stroke-opacity="0.82"/><line x1="223.6" y1="62.1" x2="336.6" y2="51.7" stroke-opacity="0.79"/><line x1="336.6" y1="51.7" x2="420.3" y2="44.0" stroke-opacity="0.71"/><line x1="420.3" y1="44.0" x2="482.4" y2="38.2" stroke-opacity="0.60"/><line x1="482.4" y1="38.2" x2="528.5" y2="34.0" stroke-opacity="0.43"/><line x1="528.5" y1="34.0" x2="562.6" y2="30.8" stroke-opacity="0.21"/><line x1="-236.6" y1="120.6" x2="-5.2" y2="95.1" stroke-opacity="0.85"/><line x1="-5.2" y1="95.1" x2="166.7" y2="76.2" stroke-opacity="0.85"/><line x1="166.7" y1="76.2" x2="294.3" y2="62.1" stroke-opacity="0.84"/><line x1="294.3" y1="62.1" x2="388.9" y2="51.7" stroke-opacity="0.79"/><line x1="388.9" y1="51.7" x2="459.2" y2="44.0" stroke-opacity="0.71"/><line x1="459.2" y1="44.0" x2="511.2" y2="38.2" stroke-opacity="0.58"/><line x1="511.2" y1="38.2" x2="549.8" y2="34.0" stroke-opacity="0.41"/><line x1="549.8" y1="34.0" x2="578.4" y2="30.8" stroke-opacity="0.20"/><line x1="-63.4" y1="120.6" x2="123.3" y2="95.1" stroke-opacity="0.88"/><line x1="123.3" y1="95.1" x2="262.0" y2="76.2" stroke-opacity="0.87"/><line x1="262.0" y1="76.2" x2="364.9" y2="62.1" stroke-opacity="0.85"/><line x1="364.9" y1="62.1" x2="441.3" y2="51.7" stroke-opacity="0.79"/><line x1="441.3" y1="51.7" x2="498.0" y2="44.0" stroke-opacity="0.69"/><line x1="498.0" y1="44.0" x2="540.0" y2="38.2" stroke-opacity="0.56"/><line x1="540.0" y1="38.2" x2="571.1" y2="34.0" stroke-opacity="0.39"/><line x1="571.1" y1="34.0" x2="594.2" y2="30.8" stroke-opacity="0.18"/><line x1="-81.2" y1="154.9" x2="109.8" y2="120.6" stroke-opacity="0.91"/><line x1="109.8" y1="120.6" x2="251.8" y2="95.1" stroke-opacity="0.91"/><line x1="251.8" y1="95.1" x2="357.3" y2="76.2" stroke-opacity="0.89"/><line x1="357.3" y1="76.2" x2="435.6" y2="62.1" stroke-opacity="0.84"/><line x1="435.6" y1="62.1" x2="493.7" y2="51.7" stroke-opacity="0.78"/><line x1="493.7" y1="51.7" x2="536.8" y2="44.0" stroke-opacity="0.68"/><line x1="536.8" y1="44.0" x2="568.7" y2="38.2" stroke-opacity="0.54"/><line x1="568.7" y1="38.2" x2="592.4" y2="34.0" stroke-opacity="0.37"/><line x1="592.4" y1="34.0" x2="610.0" y2="30.8" stroke-opacity="0.16"/><line x1="-259.4" y1="262.7" x2="-23.7" y2="200.9" stroke-opacity="0.94"/><line x1="-23.7" y1="200.9" x2="152.1" y2="154.9" stroke-opacity="0.94"/><line x1="152.1" y1="154.9" x2="283.0" y2="120.6" stroke-opacity="0.94"/><line x1="283.0" y1="120.6" x2="380.3" y2="95.1" stroke-opacity="0.92"/><line x1="380.3" y1="95.1" x2="452.6" y2="76.2" stroke-opacity="0.89"/><line x1="452.6" y1="76.2" x2="506.3" y2="62.1" stroke-opacity="0.83"/><line x1="506.3" y1="62.1" x2="546.1" y2="51.7" stroke-opacity="0.76"/><line x1="546.1" y1="51.7" x2="575.6" y2="44.0" stroke-opacity="0.66"/><line x1="575.6" y1="44.0" x2="597.5" y2="38.2" stroke-opacity="0.52"/><line x1="597.5" y1="38.2" x2="613.7" y2="34.0" stroke-opacity="0.35"/><line x1="613.7" y1="34.0" x2="625.7" y2="30.8" stroke-opacity="0.14"/><line x1="-331.2" y1="501.9" x2="-7.6" y2="345.2" stroke-opacity="0.97"/><line x1="-7.6" y1="345.2" x2="162.9" y2="262.7" stroke-opacity="0.97"/><line x1="162.9" y1="262.7" x2="290.3" y2="200.9" stroke-opacity="0.97"/><line x1="290.3" y1="200.9" x2="385.4" y2="154.9" stroke-opacity="0.96"/><line x1="385.4" y1="154.9" x2="456.2" y2="120.6" stroke-opacity="0.94"/><line x1="456.2" y1="120.6" x2="508.8" y2="95.1" stroke-opacity="0.91"/><line x1="508.8" y1="95.1" x2="547.9" y2="76.2" stroke-opacity="0.87"/><line x1="547.9" y1="76.2" x2="576.9" y2="62.1" stroke-opacity="0.81"/><line x1="576.9" y1="62.1" x2="598.4" y2="51.7" stroke-opacity="0.73"/><line x1="598.4" y1="51.7" x2="614.4" y2="44.0" stroke-opacity="0.63"/><line x1="614.4" y1="44.0" x2="626.3" y2="38.2" stroke-opacity="0.50"/><line x1="626.3" y1="38.2" x2="635.0" y2="34.0" stroke-opacity="0.32"/><line x1="635.0" y1="34.0" x2="641.5" y2="30.8" stroke-opacity="0.12"/><line x1="510.5" y1="501.9" x2="559.4" y2="345.2" stroke-opacity="0.98"/><line x1="559.4" y1="345.2" x2="585.1" y2="262.7" stroke-opacity="0.97"/><line x1="585.1" y1="262.7" x2="604.3" y2="200.9" stroke-opacity="0.96"/><line x1="604.3" y1="200.9" x2="618.7" y2="154.9" stroke-opacity="0.94"/><line x1="618.7" y1="154.9" x2="629.3" y2="120.6" stroke-opacity="0.92"/><line x1="629.3" y1="120.6" x2="637.3" y2="95.1" stroke-opacity="0.89"/><line x1="637.3" y1="95.1" x2="643.2" y2="76.2" stroke-opacity="0.84"/><line x1="643.2" y1="76.2" x2="647.6" y2="62.1" stroke-opacity="0.78"/><line x1="647.6" y1="62.1" x2="650.8" y2="51.7" stroke-opacity="0.71"/><line x1="650.8" y1="51.7" x2="653.2" y2="44.0" stroke-opacity="0.60"/><line x1="653.2" y1="44.0" x2="655.0" y2="38.2" stroke-opacity="0.47"/><line x1="655.0" y1="38.2" x2="656.3" y2="34.0" stroke-opacity="0.30"/><line x1="656.3" y1="34.0" x2="657.3" y2="30.8" stroke-opacity="0.09"/><line x1="765.8" y1="95.1" x2="738.5" y2="76.2" stroke-opacity="0.81"/><line x1="738.5" y1="76.2" x2="718.2" y2="62.1" stroke-opacity="0.75"/><line x1="718.2" y1="62.1" x2="703.2" y2="51.7" stroke-opacity="0.68"/><line x1="703.2" y1="51.7" x2="692.0" y2="44.0" stroke-opacity="0.57"/><line x1="692.0" y1="44.0" x2="683.8" y2="38.2" stroke-opacity="0.44"/><line x1="683.8" y1="38.2" x2="677.7" y2="34.0" stroke-opacity="0.27"/><line x1="677.7" y1="34.0" x2="673.1" y2="30.8" stroke-opacity="0.07"/><line x1="755.6" y1="51.7" x2="730.9" y2="44.0" stroke-opacity="0.54"/><line x1="730.9" y1="44.0" x2="712.5" y2="38.2" stroke-opacity="0.41"/><line x1="712.5" y1="38.2" x2="699.0" y2="34.0" stroke-opacity="0.25"/><line x1="699.0" y1="34.0" x2="688.9" y2="30.8" stroke-opacity="0.05"/><line x1="741.3" y1="38.2" x2="720.3" y2="34.0" stroke-opacity="0.22"/><line x1="720.3" y1="34.0" x2="704.7" y2="30.8" stroke-opacity="0.04"/><line x1="-53.5" y1="38.1" x2="-30.6" y2="33.9" stroke-opacity="0.22"/><line x1="-30.6" y1="33.9" x2="-13.6" y2="30.8" stroke-opacity="0.03"/><line x1="-74.5" y1="51.5" x2="-46.2" y2="43.8" stroke-opacity="0.54"/><line x1="-46.2" y1="43.8" x2="-25.1" y2="38.1" stroke-opacity="0.41"/><line x1="-25.1" y1="38.1" x2="-9.6" y2="33.9" stroke-opacity="0.24"/><line x1="-9.6" y1="33.9" x2="2.0" y2="30.8" stroke-opacity="0.05"/><line x1="-70.2" y1="75.8" x2="-43.0" y2="61.9" stroke-opacity="0.74"/><line x1="-43.0" y1="61.9" x2="-22.8" y2="51.5" stroke-opacity="0.67"/><line x1="-22.8" y1="51.5" x2="-7.9" y2="43.8" stroke-opacity="0.57"/><line x1="-7.9" y1="43.8" x2="3.2" y2="38.1" stroke-opacity="0.43"/><line x1="3.2" y1="38.1" x2="11.5" y2="33.9" stroke-opacity="0.27"/><line x1="11.5" y1="33.9" x2="17.6" y2="30.8" stroke-opacity="0.07"/><line x1="-63.2" y1="498.9" x2="-31.1" y2="343.1" stroke-opacity="0.97"/><line x1="-31.1" y1="343.1" x2="-14.3" y2="261.1" stroke-opacity="0.96"/><line x1="-14.3" y1="261.1" x2="-1.6" y2="199.8" stroke-opacity="0.95"/><line x1="-1.6" y1="199.8" x2="7.8" y2="154.0" stroke-opacity="0.93"/><line x1="7.8" y1="154.0" x2="14.8" y2="120.0" stroke-opacity="0.91"/><line x1="14.8" y1="120.0" x2="20.0" y2="94.6" stroke-opacity="0.88"/><line x1="20.0" y1="94.6" x2="23.9" y2="75.8" stroke-opacity="0.83"/><line x1="23.9" y1="75.8" x2="26.7" y2="61.9" stroke-opacity="0.78"/><line x1="26.7" y1="61.9" x2="28.9" y2="51.5" stroke-opacity="0.70"/><line x1="28.9" y1="51.5" x2="30.5" y2="43.8" stroke-opacity="0.60"/><line x1="30.5" y1="43.8" x2="31.6" y2="38.1" stroke-opacity="0.46"/><line x1="31.6" y1="38.1" x2="32.5" y2="33.9" stroke-opacity="0.29"/><line x1="32.5" y1="33.9" x2="33.1" y2="30.8" stroke-opacity="0.09"/><line x1="767.7" y1="498.9" x2="528.5" y2="343.1" stroke-opacity="0.98"/><line x1="528.5" y1="343.1" x2="402.5" y2="261.1" stroke-opacity="0.98"/><line x1="402.5" y1="261.1" x2="308.3" y2="199.8" stroke-opacity="0.97"/><line x1="308.3" y1="199.8" x2="238.0" y2="154.0" stroke-opacity="0.96"/><line x1="238.0" y1="154.0" x2="185.7" y2="120.0" stroke-opacity="0.94"/><line x1="185.7" y1="120.0" x2="146.8" y2="94.6" stroke-opacity="0.90"/><line x1="146.8" y1="94.6" x2="117.9" y2="75.8" stroke-opacity="0.86"/><line x1="117.9" y1="75.8" x2="96.5" y2="61.9" stroke-opacity="0.80"/><line x1="96.5" y1="61.9" x2="80.6" y2="51.5" stroke-opacity="0.73"/><line x1="80.6" y1="51.5" x2="68.8" y2="43.8" stroke-opacity="0.62"/><line x1="68.8" y1="43.8" x2="60.0" y2="38.1" stroke-opacity="0.49"/><line x1="60.0" y1="38.1" x2="53.5" y2="33.9" stroke-opacity="0.32"/><line x1="53.5" y1="33.9" x2="48.7" y2="30.8" stroke-opacity="0.11"/><line x1="819.3" y1="261.1" x2="618.2" y2="199.8" stroke-opacity="0.95"/><line x1="618.2" y1="199.8" x2="468.3" y2="154.0" stroke-opacity="0.95"/><line x1="468.3" y1="154.0" x2="356.7" y2="120.0" stroke-opacity="0.94"/><line x1="356.7" y1="120.0" x2="273.7" y2="94.6" stroke-opacity="0.92"/><line x1="273.7" y1="94.6" x2="212.0" y2="75.8" stroke-opacity="0.88"/><line x1="212.0" y1="75.8" x2="166.2" y2="61.9" stroke-opacity="0.83"/><line x1="166.2" y1="61.9" x2="132.3" y2="51.5" stroke-opacity="0.75"/><line x1="132.3" y1="51.5" x2="107.1" y2="43.8" stroke-opacity="0.65"/><line x1="107.1" y1="43.8" x2="88.4" y2="38.1" stroke-opacity="0.51"/><line x1="88.4" y1="38.1" x2="74.6" y2="33.9" stroke-opacity="0.34"/><line x1="74.6" y1="33.9" x2="64.3" y2="30.8" stroke-opacity="0.13"/><line x1="928.2" y1="199.8" x2="698.6" y2="154.0" stroke-opacity="0.92"/><line x1="698.6" y1="154.0" x2="527.6" y2="120.0" stroke-opacity="0.92"/><line x1="527.6" y1="120.0" x2="400.5" y2="94.6" stroke-opacity="0.91"/><line x1="400.5" y1="94.6" x2="306.1" y2="75.8" stroke-opacity="0.89"/><line x1="306.1" y1="75.8" x2="236.0" y2="61.9" stroke-opacity="0.84"/><line x1="236.0" y1="61.9" x2="183.9" y2="51.5" stroke-opacity="0.77"/><line x1="183.9" y1="51.5" x2="145.4" y2="43.8" stroke-opacity="0.67"/><line x1="145.4" y1="43.8" x2="116.8" y2="38.1" stroke-opacity="0.54"/><line x1="116.8" y1="38.1" x2="95.6" y2="33.9" stroke-opacity="0.36"/><line x1="95.6" y1="33.9" x2="79.9" y2="30.8" stroke-opacity="0.15"/><line x1="928.8" y1="154.0" x2="698.5" y2="120.0" stroke-opacity="0.89"/><line x1="698.5" y1="120.0" x2="527.3" y2="94.6" stroke-opacity="0.89"/><line x1="527.3" y1="94.6" x2="400.1" y2="75.8" stroke-opacity="0.88"/><line x1="400.1" y1="75.8" x2="305.7" y2="61.9" stroke-opacity="0.85"/><line x1="305.7" y1="61.9" x2="235.6" y2="51.5" stroke-opacity="0.78"/><line x1="235.6" y1="51.5" x2="183.7" y2="43.8" stroke-opacity="0.69"/><line x1="183.7" y1="43.8" x2="145.2" y2="38.1" stroke-opacity="0.56"/><line x1="145.2" y1="38.1" x2="116.6" y2="33.9" stroke-opacity="0.38"/><line x1="116.6" y1="33.9" x2="95.5" y2="30.8" stroke-opacity="0.17"/><line x1="869.5" y1="120.0" x2="654.1" y2="94.6" stroke-opacity="0.86"/><line x1="654.1" y1="94.6" x2="494.2" y2="75.8" stroke-opacity="0.86"/><line x1="494.2" y1="75.8" x2="375.4" y2="61.9" stroke-opacity="0.84"/><line x1="375.4" y1="61.9" x2="287.3" y2="51.5" stroke-opacity="0.79"/><line x1="287.3" y1="51.5" x2="222.0" y2="43.8" stroke-opacity="0.70"/><line x1="222.0" y1="43.8" x2="173.6" y2="38.1" stroke-opacity="0.58"/><line x1="173.6" y1="38.1" x2="137.7" y2="33.9" stroke-opacity="0.40"/><line x1="137.7" y1="33.9" x2="111.1" y2="30.8" stroke-opacity="0.19"/><line x1="781.0" y1="94.6" x2="588.2" y2="75.8" stroke-opacity="0.83"/><line x1="588.2" y1="75.8" x2="445.2" y2="61.9" stroke-opacity="0.82"/><line x1="445.2" y1="61.9" x2="339.0" y2="51.5" stroke-opacity="0.79"/><line x1="339.0" y1="51.5" x2="260.3" y2="43.8" stroke-opacity="0.71"/><line x1="260.3" y1="43.8" x2="202.0" y2="38.1" stroke-opacity="0.59"/><line x1="202.0" y1="38.1" x2="158.7" y2="33.9" stroke-opacity="0.42"/><line x1="158.7" y1="33.9" x2="126.6" y2="30.8" stroke-opacity="0.21"/><line x1="907.8" y1="94.6" x2="682.3" y2="75.8" stroke-opacity="0.80"/><line x1="682.3" y1="75.8" x2="514.9" y2="61.9" stroke-opacity="0.80"/><line x1="514.9" y1="61.9" x2="390.7" y2="51.5" stroke-opacity="0.78"/><line x1="390.7" y1="51.5" x2="298.6" y2="43.8" stroke-opacity="0.71"/><line x1="298.6" y1="43.8" x2="230.3" y2="38.1" stroke-opacity="0.60"/><line x1="230.3" y1="38.1" x2="179.7" y2="33.9" stroke-opacity="0.44"/><line x1="179.7" y1="33.9" x2="142.2" y2="30.8" stroke-opacity="0.22"/><line x1="776.4" y1="75.8" x2="584.6" y2="61.9" stroke-opacity="0.77"/><line x1="584.6" y1="61.9" x2="442.4" y2="51.5" stroke-opacity="0.76"/><line x1="442.4" y1="51.5" x2="336.9" y2="43.8" stroke-opacity="0.71"/><line x1="336.9" y1="43.8" x2="258.7" y2="38.1" stroke-opacity="0.61"/><line x1="258.7" y1="38.1" x2="200.8" y2="33.9" stroke-opacity="0.45"/><line x1="200.8" y1="33.9" x2="157.8" y2="30.8" stroke-opacity="0.24"/><line x1="870.4" y1="75.8" x2="654.4" y2="61.9" stroke-opacity="0.74"/><line x1="654.4" y1="61.9" x2="494.1" y2="51.5" stroke-opacity="0.74"/><line x1="494.1" y1="51.5" x2="375.2" y2="43.8" stroke-opacity="0.70"/><line x1="375.2" y1="43.8" x2="287.1" y2="38.1" stroke-opacity="0.61"/><line x1="287.1" y1="38.1" x2="221.8" y2="33.9" stroke-opacity="0.46"/><line x1="221.8" y1="33.9" x2="173.4" y2="30.8" stroke-opacity="0.26"/><line x1="964.5" y1="75.8" x2="724.1" y2="61.9" stroke-opacity="0.71"/><line x1="724.1" y1="61.9" x2="545.8" y2="51.5" stroke-opacity="0.71"/><line x1="545.8" y1="51.5" x2="413.5" y2="43.8" stroke-opacity="0.69"/><line x1="413.5" y1="43.8" x2="315.5" y2="38.1" stroke-opacity="0.61"/><line x1="315.5" y1="38.1" x2="242.8" y2="33.9" stroke-opacity="0.47"/><line x1="242.8" y1="33.9" x2="189.0" y2="30.8" stroke-opacity="0.27"/><line x1="189.0" y1="30.8" x2="149.1" y2="28.5" stroke-opacity="0.02"/><line x1="793.9" y1="61.9" x2="597.5" y2="51.5" stroke-opacity="0.69"/><line x1="597.5" y1="51.5" x2="451.9" y2="43.8" stroke-opacity="0.67"/><line x1="451.9" y1="43.8" x2="343.9" y2="38.1" stroke-opacity="0.61"/><line x1="343.9" y1="38.1" x2="263.9" y2="33.9" stroke-opacity="0.48"/><line x1="263.9" y1="33.9" x2="204.6" y2="30.8" stroke-opacity="0.28"/><line x1="204.6" y1="30.8" x2="160.6" y2="28.5" stroke-opacity="0.04"/><line x1="863.6" y1="61.9" x2="649.2" y2="51.5" stroke-opacity="0.66"/><line x1="649.2" y1="51.5" x2="490.2" y2="43.8" stroke-opacity="0.65"/><line x1="490.2" y1="43.8" x2="372.3" y2="38.1" stroke-opacity="0.60"/><line x1="372.3" y1="38.1" x2="284.9" y2="33.9" stroke-opacity="0.48"/><line x1="284.9" y1="33.9" x2="220.1" y2="30.8" stroke-opacity="0.29"/><line x1="220.1" y1="30.8" x2="172.2" y2="28.5" stroke-opacity="0.05"/><line x1="933.3" y1="61.9" x2="700.9" y2="51.5" stroke-opacity="0.62"/><line x1="700.9" y1="51.5" x2="528.5" y2="43.8" stroke-opacity="0.63"/><line x1="528.5" y1="43.8" x2="400.7" y2="38.1" stroke-opacity="0.59"/><line x1="400.7" y1="38.1" x2="305.9" y2="33.9" stroke-opacity="0.48"/><line x1="305.9" y1="33.9" x2="235.7" y2="30.8" stroke-opacity="0.30"/><line x1="235.7" y1="30.8" x2="183.7" y2="28.5" stroke-opacity="0.06"/><line x1="752.6" y1="51.5" x2="566.8" y2="43.8" stroke-opacity="0.60"/><line x1="566.8" y1="43.8" x2="429.0" y2="38.1" stroke-opacity="0.57"/><line x1="429.0" y1="38.1" x2="327.0" y2="33.9" stroke-opacity="0.48"/><line x1="327.0" y1="33.9" x2="251.3" y2="30.8" stroke-opacity="0.31"/><line x1="251.3" y1="30.8" x2="195.2" y2="28.5" stroke-opacity="0.07"/><line x1="804.2" y1="51.5" x2="605.1" y2="43.8" stroke-opacity="0.57"/><line x1="605.1" y1="43.8" x2="457.4" y2="38.1" stroke-opacity="0.56"/><line x1="457.4" y1="38.1" x2="348.0" y2="33.9" stroke-opacity="0.48"/><line x1="348.0" y1="33.9" x2="266.9" y2="30.8" stroke-opacity="0.31"/><line x1="266.9" y1="30.8" x2="206.8" y2="28.5" stroke-opacity="0.08"/><line x1="855.9" y1="51.5" x2="643.4" y2="43.8" stroke-opacity="0.54"/><line x1="643.4" y1="43.8" x2="485.8" y2="38.1" stroke-opacity="0.54"/><line x1="485.8" y1="38.1" x2="369.0" y2="33.9" stroke-opacity="0.47"/><line x1="369.0" y1="33.9" x2="282.5" y2="30.8" stroke-opacity="0.32"/><line x1="282.5" y1="30.8" x2="218.3" y2="28.5" stroke-opacity="0.09"/><line x1="907.6" y1="51.5" x2="681.7" y2="43.8" stroke-opacity="0.51"/><line x1="681.7" y1="43.8" x2="514.2" y2="38.1" stroke-opacity="0.51"/><line x1="514.2" y1="38.1" x2="390.1" y2="33.9" stroke-opacity="0.46"/><line x1="390.1" y1="33.9" x2="298.1" y2="30.8" stroke-opacity="0.32"/><line x1="298.1" y1="30.8" x2="229.9" y2="28.5" stroke-opacity="0.09"/><line x1="959.3" y1="51.5" x2="720.0" y2="43.8" stroke-opacity="0.48"/><line x1="720.0" y1="43.8" x2="542.6" y2="38.1" stroke-opacity="0.49"/><line x1="542.6" y1="38.1" x2="411.1" y2="33.9" stroke-opacity="0.45"/><line x1="411.1" y1="33.9" x2="313.6" y2="30.8" stroke-opacity="0.32"/><line x1="313.6" y1="30.8" x2="241.4" y2="28.5" stroke-opacity="0.10"/><line x1="758.3" y1="43.8" x2="571.0" y2="38.1" stroke-opacity="0.46"/><line x1="571.0" y1="38.1" x2="432.1" y2="33.9" stroke-opacity="0.43"/><line x1="432.1" y1="33.9" x2="329.2" y2="30.8" stroke-opacity="0.31"/><line x1="329.2" y1="30.8" x2="253.0" y2="28.5" stroke-opacity="0.11"/><line x1="796.6" y1="43.8" x2="599.4" y2="38.1" stroke-opacity="0.44"/><line x1="599.4" y1="38.1" x2="453.2" y2="33.9" stroke-opacity="0.41"/><line x1="453.2" y1="33.9" x2="344.8" y2="30.8" stroke-opacity="0.31"/><line x1="344.8" y1="30.8" x2="264.5" y2="28.5" stroke-opacity="0.11"/><line x1="834.9" y1="43.8" x2="627.8" y2="38.1" stroke-opacity="0.41"/><line x1="627.8" y1="38.1" x2="474.2" y2="33.9" stroke-opacity="0.39"/><line x1="474.2" y1="33.9" x2="360.4" y2="30.8" stroke-opacity="0.30"/><line x1="360.4" y1="30.8" x2="276.1" y2="28.5" stroke-opacity="0.11"/><line x1="873.3" y1="43.8" x2="656.1" y2="38.1" stroke-opacity="0.38"/><line x1="656.1" y1="38.1" x2="495.2" y2="33.9" stroke-opacity="0.37"/><line x1="495.2" y1="33.9" x2="376.0" y2="30.8" stroke-opacity="0.29"/><line x1="376.0" y1="30.8" x2="287.6" y2="28.5" stroke-opacity="0.12"/><line x1="911.6" y1="43.8" x2="684.5" y2="38.1" stroke-opacity="0.35"/><line x1="684.5" y1="38.1" x2="516.3" y2="33.9" stroke-opacity="0.35"/><line x1="516.3" y1="33.9" x2="391.6" y2="30.8" stroke-opacity="0.28"/><line x1="391.6" y1="30.8" x2="299.2" y2="28.5" stroke-opacity="0.12"/><line x1="949.9" y1="43.8" x2="712.9" y2="38.1" stroke-opacity="0.32"/><line x1="712.9" y1="38.1" x2="537.3" y2="33.9" stroke-opacity="0.33"/><line x1="537.3" y1="33.9" x2="407.1" y2="30.8" stroke-opacity="0.27"/><line x1="407.1" y1="30.8" x2="310.7" y2="28.5" stroke-opacity="0.12"/><line x1="741.3" y1="38.1" x2="558.3" y2="33.9" stroke-opacity="0.31"/><line x1="558.3" y1="33.9" x2="422.7" y2="30.8" stroke-opacity="0.26"/><line x1="422.7" y1="30.8" x2="322.2" y2="28.5" stroke-opacity="0.11"/><line x1="769.7" y1="38.1" x2="579.4" y2="33.9" stroke-opacity="0.28"/><line x1="579.4" y1="33.9" x2="438.3" y2="30.8" stroke-opacity="0.25"/><line x1="438.3" y1="30.8" x2="333.8" y2="28.5" stroke-opacity="0.11"/><line x1="798.1" y1="38.1" x2="600.4" y2="33.9" stroke-opacity="0.26"/><line x1="600.4" y1="33.9" x2="453.9" y2="30.8" stroke-opacity="0.23"/><line x1="453.9" y1="30.8" x2="345.3" y2="28.5" stroke-opacity="0.11"/><line x1="826.5" y1="38.1" x2="621.4" y2="33.9" stroke-opacity="0.23"/><line x1="621.4" y1="33.9" x2="469.5" y2="30.8" stroke-opacity="0.21"/><line x1="469.5" y1="30.8" x2="356.9" y2="28.5" stroke-opacity="0.10"/><line x1="854.9" y1="38.1" x2="642.5" y2="33.9" stroke-opacity="0.21"/><line x1="642.5" y1="33.9" x2="485.1" y2="30.8" stroke-opacity="0.20"/><line x1="485.1" y1="30.8" x2="368.4" y2="28.5" stroke-opacity="0.09"/><line x1="883.2" y1="38.1" x2="663.5" y2="33.9" stroke-opacity="0.18"/><line x1="663.5" y1="33.9" x2="500.6" y2="30.8" stroke-opacity="0.18"/><line x1="500.6" y1="30.8" x2="380.0" y2="28.5" stroke-opacity="0.09"/><line x1="911.6" y1="38.1" x2="684.5" y2="33.9" stroke-opacity="0.16"/><line x1="684.5" y1="33.9" x2="516.2" y2="30.8" stroke-opacity="0.16"/><line x1="516.2" y1="30.8" x2="391.5" y2="28.5" stroke-opacity="0.08"/><line x1="940.0" y1="38.1" x2="705.6" y2="33.9" stroke-opacity="0.13"/><line x1="705.6" y1="33.9" x2="531.8" y2="30.8" stroke-opacity="0.14"/><line x1="531.8" y1="30.8" x2="403.1" y2="28.5" stroke-opacity="0.07"/><line x1="968.4" y1="38.1" x2="726.6" y2="33.9" stroke-opacity="0.11"/><line x1="726.6" y1="33.9" x2="547.4" y2="30.8" stroke-opacity="0.12"/><line x1="547.4" y1="30.8" x2="414.6" y2="28.5" stroke-opacity="0.06"/><line x1="747.6" y1="33.9" x2="563.0" y2="30.8" stroke-opacity="0.10"/><line x1="563.0" y1="30.8" x2="426.1" y2="28.5" stroke-opacity="0.05"/><line x1="768.7" y1="33.9" x2="578.6" y2="30.8" stroke-opacity="0.08"/><line x1="578.6" y1="30.8" x2="437.7" y2="28.5" stroke-opacity="0.04"/><line x1="789.7" y1="33.9" x2="594.1" y2="30.8" stroke-opacity="0.06"/><line x1="594.1" y1="30.8" x2="449.2" y2="28.5" stroke-opacity="0.03"/><line x1="810.7" y1="33.9" x2="609.7" y2="30.8" stroke-opacity="0.04"/><line x1="831.8" y1="33.9" x2="625.3" y2="30.8" stroke-opacity="0.02"/></g><g transform="translate(-229 -128)"><path d="M496.2 334.0 L564.4 328.7 L574.9 351.5 L581.9 377.7 L586.3 390.0 L585.4 400.4 L578.4 404.0 L567.9 404.0 L552.2 400.4 L552.2 407.4 L550.4 418.0 L548.7 432.0 L540.0 435.4 L522.5 435.4 L520.7 437.2 L512.0 440.0 L505.0 432.0 L498.0 425.0 L496.2 412.7 L505.0 409.2 L519.0 407.4 L519.0 402.2 L513.7 388.2 L505.0 372.5 L498.0 355.0Z" fill="#353b47"/><path d="M515 350 Q540 345 560 360 L572 395 Q555 392 548 400 L540 380 Q525 360 515 350Z" fill="#56606f" opacity="0.45"/><path d="M492.7 414.4 L501.5 408.3 L507.6 411.0 L503.2 425.0 L510.2 438.9 L520.7 440.7 L519.8 446.8 L510.2 447.7 L500.6 438.9 L493.6 424.9Z" fill="#7c3d22"/><path d="M506.7 216.2 L480.5 230.3 L460.3 240.4 L454.2 250.5 L452.2 266.6 L448.2 284.8 L442.1 303.0 L442.1 313.1 L448.2 321.2 L470.4 325.2 L496.6 329.2 L498.7 337.3 L500.7 345.0 L569.3 341.4 L567.3 325.2 L559.2 309.0 L561.3 284.8 L563.3 252.5 L571.4 254.5 L595.6 266.6 L615.8 274.7 L625.9 266.6 L611.7 258.6 L591.5 244.4 L575.4 230.3 L563.3 218.2 L551.2 215.1 L541.0 222.2 L535.0 226.0 L515.0 221.0Z" fill="#29324f"/><path d="M498 337 L566 333 L568 343 L500 347Z" fill="#262a33"/><path d="M470 238 Q455 270 452 300 L465 300 Q470 265 485 245Z" fill="#3d4870" opacity="0.6"/><path d="M575 232 L612 260 L600 262 L570 245Z" fill="#3d4870" opacity="0.55"/><path d="M510.0 205.0 L530.0 218.0 L538.0 222.0 L534.0 245.0 L529.0 256.0 L520.0 240.0 L507.0 216.0Z" fill="#9a6e5a"/><path d="M544.7 178.0 L546.0 184.4 L545.5 191.1 L543.4 199.2 L544.5 204.6 L543.4 210.0 L541.3 215.4 L535.9 220.8 L529.2 222.1 L522.5 219.4 L515.0 214.0 L510.0 205.0 L507.0 200.0 L510.4 199.2 L513.1 197.9 L515.8 189.8 L521.1 183.1 L526.5 181.0 L531.9 183.1 L535.9 180.4 L540.0 178.4Z" fill="#aa7e68"/><path d="M530 184 L545 182 L546 192 L543 200 L545 206 L541 215 L532 220 Q538 205 530 184Z" fill="#c09078" opacity="0.7"/><path d="M510 200 L518 214 L524 220 L515 218 L508 206Z" fill="#7a5848" opacity="0.7"/><path d="M499.0 187.0 L504.0 189.0 L508.0 200.0 L507.0 206.0 L503.0 204.0 L500.0 196.0Z" fill="#a87660"/><path d="M510.4 150.1 L523.8 150.8 L534.6 157.5 L542.7 165.6 L545.4 173.6 L544.7 179.0 L540.0 178.4 L535.9 180.4 L531.9 183.1 L526.5 181.0 L521.1 183.1 L515.8 189.8 L513.1 197.9 L510.4 199.2 L506.3 196.5 L503.6 191.1 L498.9 187.1 L495.6 179.0 L494.2 169.6 L496.9 161.5 L502.3 154.8Z" fill="#433326"/><path d="M505 160 Q520 152 535 162 L525 172 Q512 165 505 172Z" fill="#5a4838" opacity="0.25"/><path d="M517.0 305.0 L530.0 300.0 L548.0 298.0 L556.0 302.0 L552.0 306.0 L565.0 312.0 L567.0 318.0 L562.0 322.0 L568.0 330.0 L566.0 336.0 L558.0 338.0 L548.0 334.0 L535.0 332.0 L520.0 330.0 L512.0 326.0 L510.0 318.0Z" fill="#b08070"/><path d="M617.0 269.0 L630.0 268.0 L640.0 276.0 L645.0 286.0 L643.0 294.0 L637.0 296.0 L632.0 290.0 L627.0 294.0 L622.0 286.0 L618.0 280.0Z" fill="#b08070"/><path d="M526 190.5 Q528.5 188.5 532 190 Q529 191.8 526 190.5Z" fill="#a0acdc"/><path d="M539.5 189.8 Q541.5 188.3 543.5 189.5 Q541.5 191 539.5 189.8Z" fill="#a0acdc"/><path d="M538 194 L541 203 L538 205" fill="none" stroke="#6a4a3a" stroke-width="0.9" opacity="0.8"/><path d="M533 211 Q537 210 541 211" fill="none" stroke="#7a4a40" stroke-width="1.2"/><circle cx="521.5" cy="200" r="2.2" fill="none" stroke="#9a9a9a" stroke-width="1"/><path d="M519.9 200.0 L515.9 220.3 L519.9 313.0 L523.9 220.3Z" fill="#8c8c8c" fill-opacity="0.55" stroke="#a8a8a8" stroke-opacity="0.45" stroke-width="0.8"/><circle cx="519.9" cy="313" r="1.6" fill="#a0a0a0" fill-opacity="0.7"/><path d="M474.4 247.5 L489.8 248.3 L555.2 230.3 L488.1 240.5Z" fill="#8c8c8c" fill-opacity="0.55" stroke="#a8a8a8" stroke-opacity="0.45" stroke-width="0.8"/><circle cx="555.2" cy="230.3" r="1.6" fill="#a0a0a0" fill-opacity="0.7"/><path d="M474.4 247.5 L466.3 257.3 L450.2 310.0 L473.8 260.2Z" fill="#8c8c8c" fill-opacity="0.55" stroke="#a8a8a8" stroke-opacity="0.45" stroke-width="0.8"/><circle cx="450.2" cy="310" r="1.6" fill="#a0a0a0" fill-opacity="0.7"/><path d="M450.2 310.0 L461.9 316.0 L518.9 321.2 L463.2 308.1Z" fill="#8c8c8c" fill-opacity="0.55" stroke="#a8a8a8" stroke-opacity="0.45" stroke-width="0.8"/><circle cx="518.9" cy="321.2" r="1.6" fill="#a0a0a0" fill-opacity="0.7"/><path d="M555.2 230.3 L559.7 238.6 L593.6 258.6 L564.5 232.2Z" fill="#8c8c8c" fill-opacity="0.55" stroke="#a8a8a8" stroke-opacity="0.45" stroke-width="0.8"/><circle cx="593.6" cy="258.6" r="1.6" fill="#a0a0a0" fill-opacity="0.7"/><path d="M593.6 258.6 L597.8 263.8 L623.9 270.7 L600.3 257.7Z" fill="#8c8c8c" fill-opacity="0.55" stroke="#a8a8a8" stroke-opacity="0.45" stroke-width="0.8"/><circle cx="623.9" cy="270.7" r="1.6" fill="#a0a0a0" fill-opacity="0.7"/><path d="M501.5 344.5 L505.9 360.6 L545.2 423.2 L512.9 356.7Z" fill="#8c8c8c" fill-opacity="0.55" stroke="#a8a8a8" stroke-opacity="0.45" stroke-width="0.8"/><circle cx="545.2" cy="423.2" r="1.6" fill="#a0a0a0" fill-opacity="0.7"/><path d="M505.0 421.4 L504.0 425.4 L510.2 440.7 L507.9 424.4Z" fill="#8c8c8c" fill-opacity="0.55" stroke="#a8a8a8" stroke-opacity="0.45" stroke-width="0.8"/><circle cx="510.2" cy="440.7" r="1.6" fill="#a0a0a0" fill-opacity="0.7"/><path d="M505.0 421.4 L511.9 425.9 L545.0 424.0 L512.5 417.9Z" fill="#8c8c8c" fill-opacity="0.55" stroke="#a8a8a8" stroke-opacity="0.45" stroke-width="0.8"/><circle cx="545" cy="424" r="1.6" fill="#a0a0a0" fill-opacity="0.7"/><path d="M545.2 334.0 L548.0 347.0 L580.2 395.2 L555.0 343.0Z" fill="#8c8c8c" fill-opacity="0.55" stroke="#a8a8a8" stroke-opacity="0.45" stroke-width="0.8"/><circle cx="580.2" cy="395.2" r="1.6" fill="#a0a0a0" fill-opacity="0.7"/><path d="M580.2 395.2 L573.0 391.2 L540.0 395.2 L573.0 399.2Z" fill="#8c8c8c" fill-opacity="0.55" stroke="#a8a8a8" stroke-opacity="0.45" stroke-width="0.8"/><circle cx="540" cy="395.2" r="1.6" fill="#a0a0a0" fill-opacity="0.7"/><path d="M541.7 395.2 L540.6 398.7 L545.2 412.7 L544.1 398.0Z" fill="#8c8c8c" fill-opacity="0.55" stroke="#a8a8a8" stroke-opacity="0.45" stroke-width="0.8"/><circle cx="545.2" cy="412.7" r="1.6" fill="#a0a0a0" fill-opacity="0.7"/><path d="M501.5 344.5 L510.3 346.5 L545.2 334.0 L508.4 338.7Z" fill="#8c8c8c" fill-opacity="0.55" stroke="#a8a8a8" stroke-opacity="0.45" stroke-width="0.8"/><circle cx="545.2" cy="334" r="1.6" fill="#a0a0a0" fill-opacity="0.7"/><path d="M519.9 313.0 L513.4 316.8 L501.5 344.5 L519.7 320.5Z" fill="#8c8c8c" fill-opacity="0.55" stroke="#a8a8a8" stroke-opacity="0.45" stroke-width="0.8"/><circle cx="501.5" cy="344.5" r="1.6" fill="#a0a0a0" fill-opacity="0.7"/></g></svg>
<svg class="a" style="left:930px;top:63px;" width="12" height="12" viewBox="0 0 12 12"><circle cx="6" cy="6" r="5.5" fill="#3a3a3a"/><rect x="5.2" y="5" width="1.6" height="4.5" fill="#cbcbcb"/><circle cx="6" cy="3.2" r="0.9" fill="#cbcbcb"/></svg>
<div class="t" style="left:945.8px;top:63.7px;font-size:12.6px;color:#0a0a0a;">Inspector</div>
<svg class="a" style="left:1170px;top:63px;" width="10" height="11" viewBox="0 0 10 11"><rect x="1" y="5" width="8" height="6" rx="0.8" fill="#3a3a3a"/><path d="M2.8 5.5 V3.4 A2.2 2.2 0 0 1 7.2 3.4 V5.5" fill="none" stroke="#3a3a3a" stroke-width="1.3"/></svg>
<svg class="a" style="left:1190px;top:62px;" width="4" height="13" viewBox="0 0 4 13"><circle cx="2" cy="2" r="1.3" fill="#3a3a3a"/><circle cx="2" cy="6.5" r="1.3" fill="#3a3a3a"/><circle cx="2" cy="11" r="1.3" fill="#3a3a3a"/></svg>
<svg class="a" style="left:929px;top:84px;" width="29" height="29" viewBox="0 0 29 29"><g transform="scale(1.93)"><circle cx="7.5" cy="1.9" r="1.8" fill="#16808c"/><path d="M4.8 4 H10.2 L10.9 9.8 H4.1Z" fill="#16808c"/><path d="M5 4.1 L0.5 5.6 L1 7.5 L5 6.5Z M10 4.1 L14.5 5.6 L14 7.5 L10 6.5Z" fill="#16808c"/><path d="M5.1 9.4 L3.7 14.8 H5.6 L7.1 9.6Z M9.9 9.4 L11.3 14.8 H9.4 L7.9 9.6Z" fill="#16808c"/></g></svg>
<div class="t" style="left:968.5px;top:83.6px;font-size:13.8px;color:#111;">Asian Boy Avatar (Avatar)</div>
<svg class="a" style="left:1163px;top:84px;" width="12" height="12" viewBox="0 0 12 12"><circle cx="6" cy="6" r="5.5" fill="#3a3a3a"/><path d="M4.2 4.5A1.8 1.8 0 1 1 6.8 6.2Q6 6.6 6 7.5" fill="none" stroke="#cbcbcb" stroke-width="1.3"/><circle cx="6" cy="9.3" r="0.8" fill="#cbcbcb"/></svg>
<svg class="a" style="left:1183px;top:84px;" width="4" height="13" viewBox="0 0 4 13"><circle cx="2" cy="2" r="1.3" fill="#3a3a3a"/><circle cx="2" cy="6.5" r="1.3" fill="#3a3a3a"/><circle cx="2" cy="11" r="1.3" fill="#3a3a3a"/></svg>
<div class="a" style="left:922px;top:128px;width:272px;height:1px;background:#9c9c9c;"></div>
<div class="a" style="left:1194px;top:76px;width:12px;height:594px;background:#bdbdbd;"></div>
<div class="a" style="left:1193px;top:76px;width:1px;height:594px;background:#a8a8a8;"></div>
<svg class="a" style="left:1195px;top:80px;" width="10" height="7" viewBox="0 0 10 7"><path d="M1 6H9L5 1.5Z" fill="#555"/></svg>
<div class="a" style="left:1195px;top:94px;width:9.7px;height:498px;border-radius:4.5px;background:#8e8e8e"></div>
<svg class="a" style="left:1195px;top:659px;" width="10" height="7" viewBox="0 0 10 7"><path d="M1 1H9L5 5.5Z" fill="#555"/></svg>
<div class="a" style="left:967px;top:132px;width:178px;height:22px;border:1px solid #a0a0a0;border-radius:3px;background:#e4e4e4;overflow:hidden"><div class="a" style="left:58px;top:0;width:120px;height:20px;background:#88b8f2;border-left:1px solid #7aa0cc"></div></div>
<div class="t" style="left:971.0px;top:137.2px;font-size:12.7px;color:#111;">Mapping</div>
<div class="t" style="left:1031.0px;top:137.2px;font-size:12.6px;color:#111;">Muscles &amp; Settings</div>
<div class="a" style="left:927px;top:158px;width:262px;height:171px;border:1px solid #a0a0a0;background:#b2b2b2"></div>
<div class="a" style="left:928px;top:159px;width:260px;height:18px;background:#d6d6d6;"></div>
<div class="a" style="left:928px;top:177px;width:260px;height:1px;background:#a0a0a0;"></div>
<div class="a" style="left:1007px;top:159px;width:1px;height:18px;background:#a0a0a0;"></div>
<div class="t" style="left:932.4px;top:162.2px;font-size:12.5px;color:#111;">Preview</div>
<div class="t" style="left:1012.4px;top:162.2px;font-size:12.55px;color:#111;">Muscle Group Preview</div>
<div class="a" style="left:933px;top:182px;width:69px;height:17px;background:#ececec;border:1px solid #b0b0b0;border-radius:3px"></div>
<div class="t" style="left:942.2px;top:184.4px;font-size:12.25px;color:#111;">Reset All</div>
<div class="t" style="left:1011.5px;top:184.2px;font-size:12.5px;color:#111;">Reset All Preview Values</div>
<div class="a" style="left:932px;top:207px;width:71px;height:2px;background:#7a7a7a;"></div>
<div class="a" style="left:961.5px;top:202.5px;width:11px;height:11px;border-radius:50%;background:#5a5a5a"></div>
<div class="t" style="left:1011.5px;top:202.8px;font-size:12.5px;color:#111;">Open Close</div>
<div class="a" style="left:932px;top:225px;width:71px;height:2px;background:#7a7a7a;"></div>
<div class="a" style="left:961.5px;top:220.5px;width:11px;height:11px;border-radius:50%;background:#5a5a5a"></div>
<div class="t" style="left:1011.5px;top:220.8px;font-size:12.5px;color:#111;">Left Right</div>
<div class="a" style="left:932px;top:243px;width:71px;height:2px;background:#7a7a7a;"></div>
<div class="a" style="left:961.5px;top:238.5px;width:11px;height:11px;border-radius:50%;background:#5a5a5a"></div>
<div class="t" style="left:1011.5px;top:238.8px;font-size:12.5px;color:#111;">Roll Left Right</div>
<div class="a" style="left:932px;top:261px;width:71px;height:2px;background:#7a7a7a;"></div>
<div class="a" style="left:961.5px;top:256.5px;width:11px;height:11px;border-radius:50%;background:#5a5a5a"></div>
<div class="t" style="left:1011.5px;top:256.8px;font-size:12.5px;color:#111;">In Out</div>
<div class="a" style="left:932px;top:279px;width:71px;height:2px;background:#7a7a7a;"></div>
<div class="a" style="left:961.5px;top:274.5px;width:11px;height:11px;border-radius:50%;background:#5a5a5a"></div>
<div class="t" style="left:1011.5px;top:274.8px;font-size:12.5px;color:#111;">Roll In Out</div>
<div class="a" style="left:932px;top:297px;width:71px;height:2px;background:#7a7a7a;"></div>
<div class="a" style="left:961.5px;top:292.5px;width:11px;height:11px;border-radius:50%;background:#5a5a5a"></div>
<div class="t" style="left:1011.5px;top:292.8px;font-size:12.5px;color:#111;">Finger Open Close</div>
<div class="a" style="left:932px;top:315px;width:71px;height:2px;background:#7a7a7a;"></div>
<div class="a" style="left:961.5px;top:310.5px;width:11px;height:11px;border-radius:50%;background:#5a5a5a"></div>
<div class="t" style="left:1011.5px;top:310.8px;font-size:12.5px;color:#111;">Finger In Out</div>
<div class="a" style="left:927px;top:335px;width:262px;height:172px;border:1px solid #a0a0a0;background:#b2b2b2"></div>
<div class="a" style="left:928px;top:336px;width:260px;height:19px;background:#d6d6d6;"></div>
<div class="a" style="left:928px;top:355px;width:260px;height:1px;background:#a0a0a0;"></div>
<div class="a" style="left:1007px;top:336px;width:1px;height:19px;background:#a0a0a0;"></div>
<div class="t" style="left:932.4px;top:339.8px;font-size:12.5px;color:#111;">Preview</div>
<div class="t" style="left:1012.4px;top:339.7px;font-size:12.55px;color:#111;">Per-Muscle Settings</div>
<svg class="a" style="left:1013px;top:363.5px;" width="9" height="10" viewBox="0 0 9 10"><path d="M0.5 0 V10 L8.5 5Z" fill="#6f6f6f"/></svg>
<div class="t" style="left:1024.4px;top:363.2px;font-size:12.6px;color:#111;">Body</div>
<svg class="a" style="left:1013px;top:381.5px;" width="9" height="10" viewBox="0 0 9 10"><path d="M0.5 0 V10 L8.5 5Z" fill="#6f6f6f"/></svg>
<div class="t" style="left:1024.4px;top:381.2px;font-size:12.6px;color:#111;">Head</div>
<svg class="a" style="left:1013px;top:399.5px;" width="9" height="10" viewBox="0 0 9 10"><path d="M0.5 0 V10 L8.5 5Z" fill="#6f6f6f"/></svg>
<div class="t" style="left:1024.4px;top:399.2px;font-size:12.6px;color:#111;">Left Arm</div>
<svg class="a" style="left:1013px;top:417.5px;" width="9" height="10" viewBox="0 0 9 10"><path d="M0.5 0 V10 L8.5 5Z" fill="#6f6f6f"/></svg>
<div class="t" style="left:1024.4px;top:417.2px;font-size:12.6px;color:#111;">Left Fingers</div>
<svg class="a" style="left:1013px;top:435.5px;" width="9" height="10" viewBox="0 0 9 10"><path d="M0.5 0 V10 L8.5 5Z" fill="#6f6f6f"/></svg>
<div class="t" style="left:1024.4px;top:435.2px;font-size:12.6px;color:#111;">Right Arm</div>
<svg class="a" style="left:1013px;top:453.5px;" width="9" height="10" viewBox="0 0 9 10"><path d="M0.5 0 V10 L8.5 5Z" fill="#6f6f6f"/></svg>
<div class="t" style="left:1024.4px;top:453.2px;font-size:12.6px;color:#111;">Right Fingers</div>
<svg class="a" style="left:1013px;top:471.5px;" width="9" height="10" viewBox="0 0 9 10"><path d="M0.5 0 V10 L8.5 5Z" fill="#6f6f6f"/></svg>
<div class="t" style="left:1024.4px;top:471.2px;font-size:12.6px;color:#111;">Left Leg</div>
<svg class="a" style="left:1013px;top:489.5px;" width="9" height="10" viewBox="0 0 9 10"><path d="M0.5 0 V10 L8.5 5Z" fill="#6f6f6f"/></svg>
<div class="t" style="left:1024.4px;top:489.2px;font-size:12.6px;color:#111;">Right Leg</div>
<div class="a" style="left:927px;top:514px;width:262px;height:170px;border:1px solid #a0a0a0;background:#b2b2b2"></div>
<div class="a" style="left:928px;top:515px;width:260px;height:19px;background:#d6d6d6;"></div>
<div class="a" style="left:928px;top:534px;width:260px;height:1px;background:#a0a0a0;"></div>
<div class="a" style="left:1007px;top:515px;width:1px;height:19px;background:#a0a0a0;"></div>
<div class="t" style="left:1011.9px;top:518.2px;font-size:12.6px;color:#111;">Additional Settings</div>
<div class="t" style="left:1011.5px;top:540.8px;font-size:12.5px;color:#111;">Upper Arm Twist</div>
<div class="a" style="left:1145px;top:539px;width:38px;height:15px;background:#ececec;border:1px solid #b4b4b4;border-radius:2px"></div>
<div class="t" style="left:1147.5px;top:540.9px;font-size:12.3px;color:#111;">0.5</div>
<div class="t" style="left:1011.5px;top:558.8px;font-size:12.5px;color:#111;">Lower Arm Twist</div>
<div class="a" style="left:1145px;top:557px;width:38px;height:15px;background:#ececec;border:1px solid #b4b4b4;border-radius:2px"></div>
<div class="t" style="left:1147.5px;top:558.9px;font-size:12.3px;color:#111;">0.5</div>
<div class="t" style="left:1011.5px;top:576.8px;font-size:12.5px;color:#111;">Upper Leg Twist</div>
<div class="a" style="left:1145px;top:575px;width:38px;height:15px;background:#ececec;border:1px solid #b4b4b4;border-radius:2px"></div>
<div class="t" style="left:1147.5px;top:576.9px;font-size:12.3px;color:#111;">0.5</div>
<div class="t" style="left:1011.5px;top:594.8px;font-size:12.5px;color:#111;">Lower Leg Twist</div>
<div class="a" style="left:1145px;top:593px;width:38px;height:15px;background:#ececec;border:1px solid #b4b4b4;border-radius:2px"></div>
<div class="t" style="left:1147.5px;top:594.9px;font-size:12.3px;color:#111;">0.5</div>
<div class="t" style="left:1011.5px;top:612.8px;font-size:12.5px;color:#111;">Arm Stretch</div>
<div class="a" style="left:1145px;top:611px;width:38px;height:15px;background:#ececec;border:1px solid #b4b4b4;border-radius:2px"></div>
<div class="t" style="left:1147.5px;top:612.9px;font-size:12.3px;color:#111;">0.05</div>
<div class="t" style="left:1011.5px;top:630.8px;font-size:12.5px;color:#111;">Leg Stretch</div>
<div class="a" style="left:1145px;top:629px;width:38px;height:15px;background:#ececec;border:1px solid #b4b4b4;border-radius:2px"></div>
<div class="t" style="left:1147.5px;top:630.9px;font-size:12.3px;color:#111;">0.05</div>
<div class="t" style="left:1011.5px;top:648.8px;font-size:12.5px;color:#111;">Feet Spacing</div>
<div class="a" style="left:1145px;top:647px;width:38px;height:15px;background:#ececec;border:1px solid #b4b4b4;border-radius:2px"></div>
<div class="t" style="left:1147.5px;top:648.9px;font-size:12.3px;color:#111;">0</div>
<div class="t" style="left:1011.5px;top:666.8px;font-size:12.5px;color:#111;">Translation DoF</div>
<div class="a" style="left:1123px;top:667px;width:12px;height:12px;background:#f2f2f2;border:1px solid #aaa;border-radius:2px"></div>
<div class="a" style="left:922px;top:670px;width:272px;height:1px;background:#a0a0a0;"></div>
<div class="a" style="left:922px;top:671px;width:284px;height:20px;background:#c6c6c6;"></div>
<div class="a" style="left:922px;top:691px;width:284px;height:1px;background:#a0a0a0;"></div>
<div class="t" style="left:929.4px;top:675.9px;font-size:12.3px;font-weight:bold;color:#111;">Asset Labels</div>
<div class="a" style="left:922px;top:692px;width:284px;height:29px;background:#c3c3c3;"></div>
<div class="a" style="left:1182px;top:697px;width:20px;height:15px;border-radius:50%;background:#2860b8"></div>
<svg class="a" style="left:1185px;top:698px;" width="13" height="13" viewBox="0 0 13 13"><path d="M1.5 1.5H6.5L11.5 6.5L6.5 11.5L1.5 6.5Z" fill="#fff"/><circle cx="4.2" cy="4.2" r="1.1" fill="#2860b8"/></svg>
<svg class="a" style="left:6px;top:457px;" width="12" height="10" viewBox="0 0 12 10"><path d="M0.5 1.5 Q0.5 0.5 1.5 0.5 H5 L6.5 2 H11 Q11.5 2 11.5 3 V9 Q11.5 9.5 11 9.5 H1.5 Q0.5 9.5 0.5 9Z" fill="#4a4a4a"/></svg>
<div class="t" style="left:22.5px;top:456.8px;font-size:12.5px;color:#0a0a0a;">Project</div>
<svg class="a" style="left:90px;top:456px;" width="11" height="12" viewBox="0 0 11 12"><rect x="0.5" y="0.5" width="10" height="11" rx="1" fill="#4a4a4a"/><path d="M2.5 3H8.5M2.5 5.5H8.5M2.5 8H6.5" stroke="#a5a5a5" stroke-width="1"/></svg>
<div class="t" style="left:105.0px;top:456.8px;font-size:12.5px;color:#0a0a0a;">Console</div>
<svg class="a" style="left:885px;top:455px;" width="10" height="11" viewBox="0 0 10 11"><rect x="1" y="5.5" width="8" height="5" rx="0.8" fill="none" stroke="#3a3a3a" stroke-width="1.2"/><path d="M2.8 5.5 V3.2 A2.3 2.3 0 0 1 7.4 3" fill="none" stroke="#3a3a3a" stroke-width="1.2"/></svg>
<svg class="a" style="left:905px;top:455px;" width="4" height="13" viewBox="0 0 4 13"><circle cx="2" cy="2" r="1.3" fill="#3a3a3a"/><circle cx="2" cy="6.5" r="1.3" fill="#3a3a3a"/><circle cx="2" cy="11" r="1.3" fill="#3a3a3a"/></svg>
<div class="a" style="left:0px;top:491px;width:920px;height:1px;background:#a5a5a5;"></div>
<svg class="a" style="left:7px;top:474px;" width="13" height="13" viewBox="0 0 13 13"><path d="M6.5 0.5V12.5M0.5 6.5H12.5" stroke="#333" stroke-width="1.6"/></svg>
<svg class="a" style="left:24px;top:479px;" width="7" height="4" viewBox="0 0 7 4"><path d="M0 0 H7 L3.5 4Z" fill="#444"/></svg>
<div class="a" style="left:488px;top:473px;width:318px;height:17px;background:#f0f0f0;border:1px solid #a6a6a6;border-radius:4px"></div>
<div class="a" style="left:788px;top:474px;width:18px;height:15px;background:#d6d6d6;border:1px solid #a6a6a6;border-radius:0 3px 3px 0"></div>
<svg class="a" style="left:790px;top:475px;" width="14" height="13" viewBox="0 0 14 13"><rect x="3.5" y="1.5" width="9" height="9" fill="none" stroke="#333" stroke-width="1.1"/><rect x="1" y="7.5" width="4.5" height="4.5" fill="#d6d6d6" stroke="#333" stroke-width="1.1"/><path d="M6.5 7.5L10.5 3.5M7.5 3.5H10.5V6.5" fill="none" stroke="#333" stroke-width="1.1"/></svg>
<svg class="a" style="left:493px;top:477px;" width="10" height="10" viewBox="0 0 10 10"><circle cx="3.8" cy="3.8" r="2.7" fill="none" stroke="#555" stroke-width="1.2"/><path d="M5.8 5.8L8.5 8.5" stroke="#555" stroke-width="1.5"/></svg>
<div class="a" style="left:808px;top:472px;width:1px;height:19px;background:#a8a8a8;"></div>
<div class="a" style="left:834px;top:472px;width:1px;height:19px;background:#a8a8a8;"></div>
<div class="a" style="left:860px;top:472px;width:1px;height:19px;background:#a8a8a8;"></div>
<div class="a" style="left:886px;top:472px;width:1px;height:19px;background:#a8a8a8;"></div>
<svg class="a" style="left:813px;top:474px;" width="16" height="14" viewBox="0 0 16 14"><circle cx="5" cy="9.5" r="4" fill="#444"/><rect x="1.5" y="0.5" width="7" height="5.5" fill="#444"/><path d="M8.5 13L12 5.5L15.5 13Z" fill="#444"/></svg>
<svg class="a" style="left:840px;top:475px;" width="13" height="12" viewBox="0 0 13 12"><path d="M1 6L6 1H12V7L7 12Z" fill="#444"/><circle cx="9" cy="4" r="1.2" fill="#c8c8c8"/></svg>
<svg class="a" style="left:866px;top:475px;" width="13" height="12" viewBox="0 0 13 12"><path d="M6.5 0.5L8.3 4.4L12.5 4.8L9.3 7.6L10.2 11.8L6.5 9.6L2.8 11.8L3.7 7.6L0.5 4.8L4.7 4.4Z" fill="#888"/></svg>
<svg class="a" style="left:891px;top:475px;" width="14" height="12" viewBox="0 0 14 12"><path d="M1 6Q7 0 13 6Q7 12 1 6Z" fill="none" stroke="#444" stroke-width="1.2"/><path d="M2 11L12 1" stroke="#444" stroke-width="1.2"/></svg>
<div class="t" style="left:905.5px;top:474.8px;font-size:12.5px;color:#222;">7</div>
<div class="a" style="left:207px;top:492px;width:1px;height:229px;background:#a5a5a5;"></div>
<svg class="a" style="left:4px;top:496px;" width="9" height="8" viewBox="0 0 9 8"><path d="M0 0 H9 L4.5 8Z" fill="#707070"/></svg>
<svg class="a" style="left:18px;top:493px;" width="12" height="12" viewBox="0 0 12 12"><path d="M6 0.5L7.7 4.3L11.5 4.6L8.6 7.2L9.5 11.3L6 9.2L2.5 11.3L3.4 7.2L0.5 4.6L4.3 4.3Z" fill="#444"/></svg>
<div class="t" style="left:35.4px;top:493.9px;font-size:12.1px;font-weight:bold;color:#111;">Favorites</div>
<svg class="a" style="left:32px;top:510px;" width="12" height="12" viewBox="0 0 12 12"><circle cx="4.8" cy="4.8" r="3.6" fill="none" stroke="#555" stroke-width="1.2"/><path d="M7.5 7.5 L11 11" stroke="#555" stroke-width="1.6"/></svg>
<div class="t" style="left:48.5px;top:509.8px;font-size:12.45px;color:#111;">All Materials</div>
<svg class="a" style="left:32px;top:526px;" width="12" height="12" viewBox="0 0 12 12"><circle cx="4.8" cy="4.8" r="3.6" fill="none" stroke="#555" stroke-width="1.2"/><path d="M7.5 7.5 L11 11" stroke="#555" stroke-width="1.6"/></svg>
<div class="t" style="left:48.5px;top:525.8px;font-size:12.45px;color:#111;">All Models</div>
<svg class="a" style="left:32px;top:542px;" width="12" height="12" viewBox="0 0 12 12"><circle cx="4.8" cy="4.8" r="3.6" fill="none" stroke="#555" stroke-width="1.2"/><path d="M7.5 7.5 L11 11" stroke="#555" stroke-width="1.6"/></svg>
<div class="t" style="left:48.5px;top:541.8px;font-size:12.45px;color:#111;">All Prefabs</div>
<svg class="a" style="left:4px;top:575px;" width="9" height="8" viewBox="0 0 9 8"><path d="M0 0 H9 L4.5 8Z" fill="#707070"/></svg>
<svg class="a" style="left:18px;top:572px;" width="14" height="12" viewBox="0 0 14 12"><path d="M0.5 1.5Q0.5 0.5 1.5 0.5H5L6.5 2H11Q12 2 12 3V4H3.5L0.5 11Z" fill="#4a4a4a"/><path d="M3.5 4.8H13.5L11 11.5H0.8Z" fill="#4a4a4a"/></svg>
<div class="t" style="left:35.4px;top:572.8px;font-size:12.4px;font-weight:bold;color:#111;">Assets</div>
<div class="a" style="left:0px;top:587px;width:207px;height:16px;background:#a8a8a8;"></div>
<svg class="a" style="left:19px;top:590px;" width="9" height="10" viewBox="0 0 9 10"><path d="M0.5 0 V10 L8.5 5Z" fill="#707070"/></svg>
<svg class="a" style="left:32px;top:589px;" width="12" height="11" viewBox="0 0 12 11"><path d="M0.5 1.5 Q0.5 0.5 1.5 0.5 H5 L6.5 2 H11 Q11.5 2 11.5 3 V10 Q11.5 10.5 11 10.5 H1.5 Q0.5 10.5 0.5 10Z" fill="#4a4a4a"/></svg>
<div class="t" style="left:48.5px;top:588.8px;font-size:12.45px;color:#111;">Models</div>
<svg class="a" style="left:19px;top:606px;" width="9" height="10" viewBox="0 0 9 10"><path d="M0.5 0 V10 L8.5 5Z" fill="#707070"/></svg>
<svg class="a" style="left:32px;top:605px;" width="12" height="11" viewBox="0 0 12 11"><path d="M0.5 1.5 Q0.5 0.5 1.5 0.5 H5 L6.5 2 H11 Q11.5 2 11.5 3 V10 Q11.5 10.5 11 10.5 H1.5 Q0.5 10.5 0.5 10Z" fill="#4a4a4a"/></svg>
<div class="t" style="left:48.5px;top:605.1px;font-size:11.8px;color:#111;">TSP</div>
<svg class="a" style="left:5px;top:622px;" width="9" height="10" viewBox="0 0 9 10"><path d="M0.5 0 V10 L8.5 5Z" fill="#707070"/></svg>
<svg class="a" style="left:18px;top:621px;" width="12" height="11" viewBox="0 0 12 11"><path d="M0.5 1.5 Q0.5 0.5 1.5 0.5 H5 L6.5 2 H11 Q11.5 2 11.5 3 V10 Q11.5 10.5 11 10.5 H1.5 Q0.5 10.5 0.5 10Z" fill="#4a4a4a"/></svg>
<div class="t" style="left:35.4px;top:620.9px;font-size:12.3px;font-weight:bold;color:#111;">Packages</div>
<div class="a" style="left:208px;top:492px;width:712px;height:209px;background:#b7b7b7;"></div>
<div class="a" style="left:208px;top:492px;width:712px;height:20px;background:#c6c6c6;"></div>
<div class="a" style="left:208px;top:512px;width:712px;height:1px;background:#a5a5a5;"></div>
<div class="t" style="left:212.3px;top:496.3px;font-size:12.45px;color:#222;">Assets</div>
<svg class="a" style="left:256px;top:497px;" width="7" height="11" viewBox="0 0 7 11"><path d="M1 1L5.5 5.5L1 10" fill="none" stroke="#777" stroke-width="1.3"/></svg>
<div class="t" style="left:267.2px;top:496.4px;font-size:12.15px;font-weight:bold;color:#111;">Models</div>
<div class="a" style="left:225px;top:525px;width:60px;height:60px;background:#474747;box-shadow:0 0 1px #777"></div>
<svg class="a" style="left:225px;top:525px;" width="60" height="60" viewBox="0 0 60 60"><path d="M28.5 16 L33.5 15.5 L34 30 L28.5 30Z" fill="#262626"/><circle cx="31" cy="13" r="2.4" fill="#2a2a2a"/><path d="M29 17 L20 21.5 L20.3 22.8 L29.5 19.5Z M33 16.5 L40 14.5 L40.2 15.7 L33.5 18.5Z" fill="#262626"/><path d="M28.5 29.5 L28.5 46 L30.3 46 L31 31Z M31 31 L32.2 45 L34 45 L34 29.5Z" fill="#2a2a2a"/><path d="M28 46 H30.8 V47.5 H27.5Z M32 45 H34.5 L35 46.5 H32Z" fill="#333"/></svg>
<div class="a" style="left:278px;top:547px;width:17px;height:17px;border-radius:50%;background:#5b5b5b;border:1px solid #8a8a8a;box-shadow:1px 1px 1px rgba(0,0,0,.35)"></div>
<svg class="a" style="left:283px;top:551px;" width="9" height="10" viewBox="0 0 9 10"><path d="M1 0.5L8 5L1 9.5Z" fill="#e6e6e6"/></svg>
<div class="t" style="left:215px;width:80px;text-align:center;top:590.0px;font-size:10.7px;color:#111">AfricanBoy</div>
<div class="a" style="left:301px;top:525px;width:60px;height:60px;background:#474747;box-shadow:0 0 1px #777"></div>
<svg class="a" style="left:301px;top:525px;" width="60" height="60" viewBox="0 0 60 60"><path d="M28.5 16 L33.5 15.5 L34 30 L28.5 30Z" fill="#3a2a26"/><circle cx="31" cy="13" r="2.4" fill="#3a3030"/><path d="M29 17 L20 21.5 L20.3 22.8 L29.5 19.5Z M33 16.5 L40 14.5 L40.2 15.7 L33.5 18.5Z" fill="#3a2a26"/><path d="M28.5 29.5 L28.5 46 L30.3 46 L31 31Z M31 31 L32.2 45 L34 45 L34 29.5Z" fill="#2e2626"/><path d="M28 46 H30.8 V47.5 H27.5Z M32 45 H34.5 L35 46.5 H32Z" fill="#777"/></svg>
<div class="a" style="left:354px;top:547px;width:17px;height:17px;border-radius:50%;background:#5b5b5b;border:1px solid #8a8a8a;box-shadow:1px 1px 1px rgba(0,0,0,.35)"></div>
<svg class="a" style="left:359px;top:551px;" width="9" height="10" viewBox="0 0 9 10"><path d="M1 0.5L8 5L1 9.5Z" fill="#e6e6e6"/></svg>
<div class="t" style="left:291px;width:80px;text-align:center;top:590.0px;font-size:10.7px;color:#111">AfricanGirl</div>
<div class="a" style="left:377px;top:525px;width:60px;height:60px;background:#474747;box-shadow:0 0 1px #777"></div>
<svg class="a" style="left:377px;top:525px;" width="60" height="60" viewBox="0 0 60 60"><path d="M28.5 16 L33.5 15.5 L34 30 L28.5 30Z" fill="#2a3148"/><circle cx="31" cy="13" r="2.4" fill="#2e3448"/><path d="M29 17 L20 21.5 L20.3 22.8 L29.5 19.5Z M33 16.5 L40 14.5 L40.2 15.7 L33.5 18.5Z" fill="#2a3148"/><path d="M28.5 29.5 L28.5 46 L30.3 46 L31 31Z M31 31 L32.2 45 L34 45 L34 29.5Z" fill="#2a3148"/><path d="M28 46 H30.8 V47.5 H27.5Z M32 45 H34.5 L35 46.5 H32Z" fill="#8a4a2a"/></svg>
<div class="a" style="left:430px;top:547px;width:17px;height:17px;border-radius:50%;background:#5b5b5b;border:1px solid #8a8a8a;box-shadow:1px 1px 1px rgba(0,0,0,.35)"></div>
<svg class="a" style="left:435px;top:551px;" width="9" height="10" viewBox="0 0 9 10"><path d="M1 0.5L8 5L1 9.5Z" fill="#e6e6e6"/></svg>
<div class="t" style="left:367px;width:80px;text-align:center;top:590.0px;font-size:10.7px;color:#111">AsianBoy</div>
<div class="a" style="left:453px;top:525px;width:60px;height:60px;background:#474747;box-shadow:0 0 1px #777"></div>
<svg class="a" style="left:453px;top:525px;" width="60" height="60" viewBox="0 0 60 60"><path d="M28.5 16 L33.5 15.5 L34 30 L28.5 30Z" fill="#2a3148"/><circle cx="31" cy="13" r="2.4" fill="#2e3448"/><path d="M29 17 L20 21.5 L20.3 22.8 L29.5 19.5Z M33 16.5 L40 14.5 L40.2 15.7 L33.5 18.5Z" fill="#2a3148"/><path d="M28.5 29.5 L28.5 46 L30.3 46 L31 31Z M31 31 L32.2 45 L34 45 L34 29.5Z" fill="#9a7060"/><path d="M28 46 H30.8 V47.5 H27.5Z M32 45 H34.5 L35 46.5 H32Z" fill="#666"/></svg>
<div class="a" style="left:506px;top:547px;width:17px;height:17px;border-radius:50%;background:#5b5b5b;border:1px solid #8a8a8a;box-shadow:1px 1px 1px rgba(0,0,0,.35)"></div>
<svg class="a" style="left:511px;top:551px;" width="9" height="10" viewBox="0 0 9 10"><path d="M1 0.5L8 5L1 9.5Z" fill="#e6e6e6"/></svg>
<div class="t" style="left:443px;width:80px;text-align:center;top:590.0px;font-size:10.7px;color:#111">AsianGirl</div>
<div class="a" style="left:529px;top:525px;width:60px;height:60px;background:#474747;box-shadow:0 0 1px #777"></div>
<svg class="a" style="left:529px;top:525px;" width="60" height="60" viewBox="0 0 60 60"><path d="M28.5 16 L33.5 15.5 L34 30 L28.5 30Z" fill="#2e2e2e"/><circle cx="31" cy="13" r="2.4" fill="#333"/><path d="M29 17 L20 21.5 L20.3 22.8 L29.5 19.5Z M33 16.5 L40 14.5 L40.2 15.7 L33.5 18.5Z" fill="#2e2e2e"/><path d="M28.5 29.5 L28.5 46 L30.3 46 L31 31Z M31 31 L32.2 45 L34 45 L34 29.5Z" fill="#2a3a5a"/><path d="M28 46 H30.8 V47.5 H27.5Z M32 45 H34.5 L35 46.5 H32Z" fill="#333"/></svg>
<div class="a" style="left:582px;top:547px;width:17px;height:17px;border-radius:50%;background:#5b5b5b;border:1px solid #8a8a8a;box-shadow:1px 1px 1px rgba(0,0,0,.35)"></div>
<svg class="a" style="left:587px;top:551px;" width="9" height="10" viewBox="0 0 9 10"><path d="M1 0.5L8 5L1 9.5Z" fill="#e6e6e6"/></svg>
<div class="t" style="left:519px;width:80px;text-align:center;top:590.0px;font-size:10.7px;color:#111">Caucasian...</div>
<div class="a" style="left:605px;top:525px;width:60px;height:60px;background:#474747;box-shadow:0 0 1px #777"></div>
<svg class="a" style="left:605px;top:525px;" width="60" height="60" viewBox="0 0 60 60"><path d="M28.5 16 L33.5 15.5 L34 30 L28.5 30Z" fill="#2a3148"/><circle cx="31" cy="13" r="2.4" fill="#2e3448"/><path d="M29 17 L20 21.5 L20.3 22.8 L29.5 19.5Z M33 16.5 L40 14.5 L40.2 15.7 L33.5 18.5Z" fill="#2a3148"/><path d="M28.5 29.5 L28.5 46 L30.3 46 L31 31Z M31 31 L32.2 45 L34 45 L34 29.5Z" fill="#2a3148"/><path d="M28 46 H30.8 V47.5 H27.5Z M32 45 H34.5 L35 46.5 H32Z" fill="#555"/></svg>
<div class="a" style="left:658px;top:547px;width:17px;height:17px;border-radius:50%;background:#5b5b5b;border:1px solid #8a8a8a;box-shadow:1px 1px 1px rgba(0,0,0,.35)"></div>
<svg class="a" style="left:663px;top:551px;" width="9" height="10" viewBox="0 0 9 10"><path d="M1 0.5L8 5L1 9.5Z" fill="#e6e6e6"/></svg>
<div class="t" style="left:595px;width:80px;text-align:center;top:590.0px;font-size:10.7px;color:#111">Caucasian...</div>
<div class="a" style="left:681px;top:525px;width:60px;height:60px;background:#474747;box-shadow:0 0 1px #777"></div>
<svg class="a" style="left:681px;top:525px;" width="60" height="60" viewBox="0 0 60 60"><circle cx="31" cy="11.5" r="2.3" fill="#8a7060"/><path d="M28 15 L34 15 L35.5 31 L28 31 Q26.5 24 28 15Z" fill="#2a3148"/><path d="M33.5 16 L40 24 L41 23.5 L35 15.5Z M28 16 L26 28 L27.5 29 L29 18Z" fill="#2a3148"/><path d="M28.5 30.5 L28.5 47 L30.5 47 L31.5 32Z M31.5 32 L34 45 L36 45 L35 30.5Z" fill="#262c40"/><path d="M28 47 H31 V49 H28Z M33.5 45 H36.5 L37 47 H34Z" fill="#8a4a2a"/></svg>
<div class="a" style="left:734px;top:547px;width:17px;height:17px;border-radius:50%;background:#5b5b5b;border:1px solid #8a8a8a;box-shadow:1px 1px 1px rgba(0,0,0,.35)"></div>
<svg class="a" style="left:739px;top:551px;" width="9" height="10" viewBox="0 0 9 10"><path d="M1 0.5L8 5L1 9.5Z" fill="#e6e6e6"/></svg>
<div class="t" style="left:671px;width:80px;text-align:center;top:590.0px;font-size:10.7px;color:#111">SampleHu...</div>
<svg class="a" style="left:763px;top:535px;" width="48" height="41" viewBox="0 0 48 41"><path d="M0 4Q0 0 4 0H18L22 8H44Q48 8 48 12V37Q48 41 44 41H4Q0 41 0 37Z" fill="#4a4a4a"/></svg>
<div class="t" style="left:747px;width:80px;text-align:center;top:590px;font-size:11.3px;color:#111">textures</div>
<div class="a" style="left:208px;top:700px;width:712px;height:1px;background:#a5a5a5;"></div>
<div class="a" style="left:208px;top:701px;width:712px;height:20px;background:#c9c9c9;"></div>
<div class="a" style="left:849px;top:710px;width:54px;height:2px;background:#7a7a7a;"></div>
<div class="a" style="left:875.5px;top:705.5px;width:11px;height:11px;border-radius:50%;background:#5a5a5a"></div>
<div class="a" style="left:0px;top:721px;width:1206px;height:22px;background:#808080;"></div>
<div class="a" style="left:1102px;top:723px;width:1px;height:20px;background:#6e6e6e;"></div>
<div class="a" style="left:1128px;top:723px;width:1px;height:20px;background:#6e6e6e;"></div>
<div class="a" style="left:1154px;top:723px;width:1px;height:20px;background:#6e6e6e;"></div>
<div class="a" style="left:1180px;top:723px;width:1px;height:20px;background:#6e6e6e;"></div>
<svg class="a" style="left:1106px;top:724px;" width="17" height="17" viewBox="0 0 17 17"><ellipse cx="8.5" cy="9.5" rx="4.5" ry="5.5" fill="#555"/><path d="M2.5 5.5L6 7.5M14.5 5.5L11 7.5M1.5 10.5H4.5M15.5 10.5H12.5M2.5 15.5L5.5 12.5M14.5 15.5L11.5 12.5M5.5 2.5L7 4.5M11.5 2.5L10 4.5" stroke="#555" stroke-width="1.3"/><path d="M1.5 1.5L15.5 15.5" stroke="#808080" stroke-width="2.2"/><path d="M1.5 1.5L15.5 15.5" stroke="#555" stroke-width="1.1"/></svg>
<svg class="a" style="left:1132px;top:724px;" width="17" height="17" viewBox="0 0 17 17"><ellipse cx="8.5" cy="4.5" rx="6" ry="2.6" fill="#555"/><path d="M2.5 7Q8.5 10.5 14.5 7V9.5Q8.5 13 2.5 9.5Z M2.5 11Q8.5 14.5 14.5 11V13.5Q8.5 17 2.5 13.5Z" fill="#555"/><path d="M1.5 1.5L15.5 15.5" stroke="#808080" stroke-width="2.2"/><path d="M1.5 1.5L15.5 15.5" stroke="#555" stroke-width="1.1"/></svg>
<svg class="a" style="left:1158px;top:724px;" width="17" height="17" viewBox="0 0 17 17"><path d="M3 6A6 6 0 0 1 14 6M14 11A6 6 0 0 1 3 11" fill="none" stroke="#555" stroke-width="1.3"/><circle cx="8.5" cy="8" r="2.6" fill="#555"/><rect x="7.2" y="10" width="2.6" height="2.5" fill="#555"/><path d="M1.5 1.5L15.5 15.5" stroke="#808080" stroke-width="2.2"/><path d="M1.5 1.5L15.5 15.5" stroke="#555" stroke-width="1.1"/></svg>
<svg class="a" style="left:1184px;top:724px;" width="17" height="17" viewBox="0 0 17 17"><circle cx="8.5" cy="8.5" r="6.5" fill="none" stroke="#555" stroke-width="1.2"/><path d="M5.5 8.5L7.8 10.8L11.8 6.3" fill="none" stroke="#555" stroke-width="1.3"/></svg>
<div class="a" style="left:231px;top:130px;width:43px;height:146px;background:#a9a9a9;border-radius:4px"></div>
<div class="a" style="left:244px;top:136px;width:17px;height:1px;background:#555;"></div>
<div class="a" style="left:244px;top:139px;width:17px;height:1px;background:#555;"></div>
<div class="a" style="left:234px;top:147px;width:38px;height:20px;background:#e2e2e2;border-radius:3px"></div>
<div class="a" style="left:234px;top:167px;width:38px;height:1px;background:#b5b5b5;"></div>
<div class="a" style="left:234px;top:168px;width:38px;height:20px;background:#80b2ee;border-radius:0px"></div>
<div class="a" style="left:234px;top:188px;width:38px;height:1px;background:#b5b5b5;"></div>
<div class="a" style="left:234px;top:189px;width:38px;height:20px;background:#e2e2e2;border-radius:0px"></div>
<div class="a" style="left:234px;top:209px;width:38px;height:1px;background:#b5b5b5;"></div>
<div class="a" style="left:234px;top:210px;width:38px;height:20px;background:#e2e2e2;border-radius:0px"></div>
<div class="a" style="left:234px;top:230px;width:38px;height:1px;background:#b5b5b5;"></div>
<div class="a" style="left:234px;top:231px;width:38px;height:20px;background:#e2e2e2;border-radius:0px"></div>
<div class="a" style="left:234px;top:251px;width:38px;height:1px;background:#b5b5b5;"></div>
<div class="a" style="left:234px;top:252px;width:38px;height:20px;background:#e2e2e2;border-radius:3px"></div>
<svg class="a" style="left:244px;top:149px;" width="17" height="17" viewBox="0 0 17 17"><g stroke="#333" stroke-linecap="round" fill="none"><path d="M6 4.5V9M8.5 2.5V8.5M11 3V9M13.2 5V10" stroke-width="2"/><path d="M3.5 9L5.5 12" stroke-width="2"/></g><path d="M5 8.5H14.2V11Q14.2 15.5 9.5 15.5Q6.5 15.5 5 12.5Z" fill="#333"/></svg>
<svg class="a" style="left:244px;top:170px;" width="17" height="17" viewBox="0 0 17 17"><g fill="none" stroke="#fff" stroke-width="1.1"><path d="M8.5 1.5V6.5M8.5 10.5V15.5M1.5 8.5H6.5M10.5 8.5H15.5"/><path d="M6.5 3.5L8.5 1.5L10.5 3.5M6.5 13.5L8.5 15.5L10.5 13.5M3.5 6.5L1.5 8.5L3.5 10.5M13.5 6.5L15.5 8.5L13.5 10.5"/></g></svg>
<svg class="a" style="left:244px;top:191px;" width="17" height="17" viewBox="0 0 17 17"><path d="M6.5 2.6A6 6 0 0 0 5.5 14.2M10.5 14.4A6 6 0 0 0 11.5 2.8" fill="none" stroke="#333" stroke-width="1.2"/><path d="M2.5 14.5H6V11M14.5 2.5H11V6" fill="none" stroke="#333" stroke-width="1.2"/></svg>
<svg class="a" style="left:244px;top:212px;" width="17" height="17" viewBox="0 0 17 17"><rect x="1.5" y="1.5" width="14" height="14" fill="none" stroke="#333" stroke-width="1.2"/><rect x="1.5" y="10" width="5.5" height="5.5" fill="none" stroke="#333" stroke-width="1.2"/><path d="M7 10L12.5 4.5M9 4.5H12.5V8" fill="none" stroke="#333" stroke-width="1.3"/></svg>
<svg class="a" style="left:244px;top:233px;" width="17" height="17" viewBox="0 0 17 17"><rect x="2.5" y="2.5" width="12" height="12" fill="none" stroke="#333" stroke-width="1.1" stroke-dasharray="2 2"/><rect x="1" y="1" width="3" height="3" fill="#333"/><rect x="13" y="1" width="3" height="3" fill="#333"/><rect x="1" y="13" width="3" height="3" fill="#333"/><rect x="13" y="13" width="3" height="3" fill="#333"/></svg>
<svg class="a" style="left:244px;top:254px;" width="17" height="17" viewBox="0 0 17 17"><circle cx="8.5" cy="8.5" r="6" fill="none" stroke="#333" stroke-width="1.1"/><path d="M8.5 3V14M3 8.5H14" stroke="#333" stroke-width="1.1"/><path d="M6.5 5L8.5 3L10.5 5M6.5 12L8.5 14L10.5 12M5 6.5L3 8.5L5 10.5M12 6.5L14 8.5L12 10.5" fill="none" stroke="#333" stroke-width="1.1"/><path d="M1 4V1H4M13 1H16V4M16 13V16H13M4 16H1V13" fill="none" stroke="#333" stroke-width="1.2"/></svg>
<div class="a" style="left:816px;top:135px;width:16px;height:1px;background:#5a5a5a;"></div>
<div class="a" style="left:816px;top:139px;width:16px;height:1px;background:#5a5a5a;"></div>
<svg class="a" style="left:891px;top:144px;" width="12" height="12" viewBox="0 0 12 12"><rect x="2" y="5" width="8" height="5.5" fill="#bdbdbd"/><path d="M3.8 5.5V4A2.2 2.2 0 0 1 8.2 4V5.5" fill="none" stroke="#bdbdbd" stroke-width="1.2"/></svg>
<svg class="a" style="left:825px;top:138px;" width="80" height="70" viewBox="0 0 80 70"><g transform="translate(-825 -138)"><path d="M864.6 181 L846 170 A5 5 0 0 0 845.5 177.5 Z" fill="#d2d2d2"/><path d="M864.6 181 L852.5 169.5 A5.5 5 0 0 0 845.5 177.5 Z" fill="#cdcdcd"/><path d="M864.6 181 L883 170 A5 5 0 0 1 883.5 177.5 Z" fill="#d2d2d2"/><path d="M864.6 181 L876.5 169.5 A5.5 5 0 0 1 883.5 177.5 Z" fill="#cdcdcd"/><path d="M862 185 L860.5 199 A4.2 4.2 0 0 0 868.7 199 L867.2 185Z" fill="#d0d0d0"/><path d="M864.6 171.5 L873.5 176 L873.5 186 L864.6 191 L855.7 186 L855.7 176Z" fill="#c6c6c6"/><path d="M864.6 171.5 L873.5 176 L864.6 180.5 L855.7 176Z" fill="#a9a9a9"/><path d="M858 151 H872 L865 172Z" fill="#5cbf3a"/><ellipse cx="865" cy="151.5" rx="7" ry="2" fill="#74d04e"/><path d="M856 182 L836 184 Q836 192 844 197Z" fill="#c03a22"/><path d="M856 182 L847 185 L844 197Z" fill="#a02a18"/><path d="M873 182 L893 184 Q893 192 885 197Z" fill="#3a5fd0"/><path d="M873 182 L882 185 L885 197Z" fill="#2a48b0"/></g></svg>
<div class="t" style="left:860.5px;top:137.2px;font-size:11.5px;color:#cfcfcf;">y</div>
<div class="t" style="left:827.0px;top:187.2px;font-size:11.5px;color:#cfcfcf;">x</div>
<div class="t" style="left:893.0px;top:187.2px;font-size:11.5px;color:#cfcfcf;">z</div>
<svg class="a" style="left:840px;top:224px;" width="12" height="13" viewBox="0 0 12 13"><path d="M11 1.5L1.5 6.5L11 11.5" fill="none" stroke="#c4c4c4" stroke-width="1"/></svg>
<div class="t" style="left:853.4px;top:224.8px;font-size:12.3px;color:#c4c4c4;">Persp</div>
</div>
</body></html>
